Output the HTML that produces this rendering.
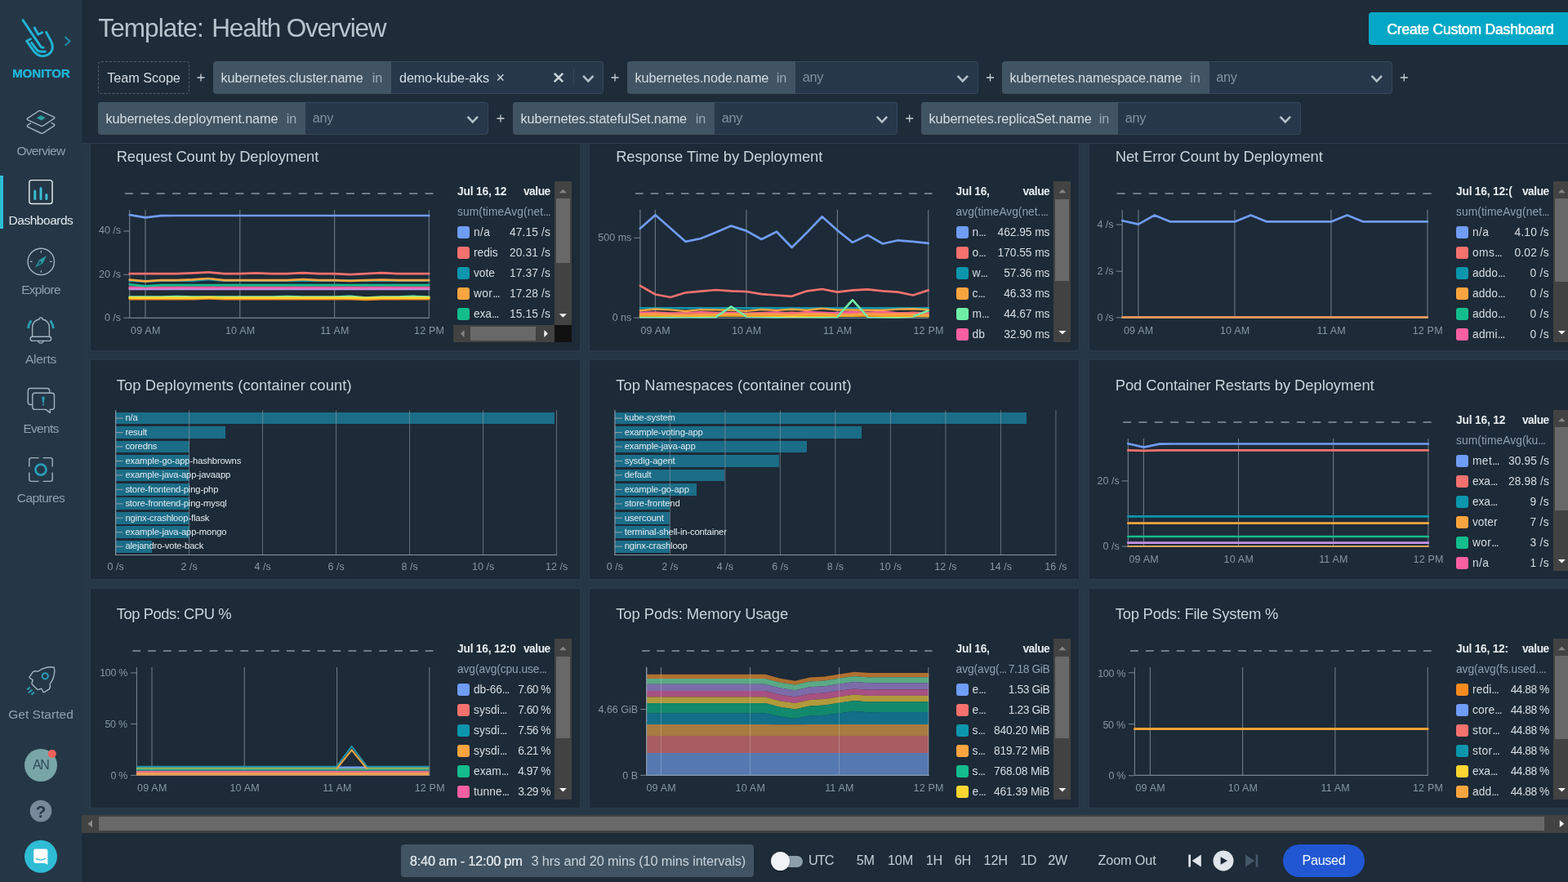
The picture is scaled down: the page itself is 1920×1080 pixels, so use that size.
<!DOCTYPE html>
<html lang="en"><head><meta charset="utf-8"><title>Template: Health Overview</title>
<style>
html,body{margin:0;padding:0;width:1920px;height:1080px;overflow:hidden;background:#1e2b38;font-family:'Liberation Sans', Arial, sans-serif;}
#bg div{position:absolute;box-sizing:border-box;}
#tx span{position:absolute;white-space:pre;}
#tx{will-change:transform;}
#gfx{position:absolute;left:0;top:0;width:1920px;height:1080px;}
#tx,#bg,#ov{position:absolute;left:0;top:0;width:1920px;height:1080px;overflow:hidden;}
#ov *{position:absolute;}
</style></head><body>
<div id="bg">
<div style="left:0px;top:0px;width:100px;height:1080px;background:#253746;"></div>
<div style="left:0px;top:215px;width:4px;height:65px;background:#2ebdd6;"></div>
<div style="left:1676px;top:15px;width:250px;height:40px;background:#04a8c6;border-radius:4px;"></div>
<div style="left:120px;top:75px;width:111.5px;height:40px;background:transparent;border:1px dashed #4d6070;border-radius:4px;"></div>
<div style="left:261px;top:75px;width:222px;height:40px;background:#415463;border-radius:4px 0 0 4px;"></div>
<div style="left:479px;top:75px;width:260px;height:40px;background:#26384a;border:1px solid #34475a;border-left:0;border-radius:0 4px 4px 0;"></div>
<div style="left:768px;top:75px;width:210px;height:40px;background:#415463;border-radius:4px 0 0 4px;"></div>
<div style="left:974px;top:75px;width:223.5px;height:40px;background:#26384a;border:1px solid #34475a;border-left:0;border-radius:0 4px 4px 0;"></div>
<div style="left:1227px;top:75px;width:257.5px;height:40px;background:#415463;border-radius:4px 0 0 4px;"></div>
<div style="left:1480.5px;top:75px;width:224px;height:40px;background:#26384a;border:1px solid #34475a;border-left:0;border-radius:0 4px 4px 0;"></div>
<div style="left:120px;top:125px;width:258px;height:40px;background:#415463;border-radius:4px 0 0 4px;"></div>
<div style="left:374px;top:125px;width:223.5px;height:40px;background:#26384a;border:1px solid #34475a;border-left:0;border-radius:0 4px 4px 0;"></div>
<div style="left:628px;top:125px;width:251px;height:40px;background:#415463;border-radius:4px 0 0 4px;"></div>
<div style="left:875px;top:125px;width:223.7px;height:40px;background:#26384a;border:1px solid #34475a;border-left:0;border-radius:0 4px 4px 0;"></div>
<div style="left:1128px;top:125px;width:245px;height:40px;background:#415463;border-radius:4px 0 0 4px;"></div>
<div style="left:1369px;top:125px;width:223.5px;height:40px;background:#26384a;border:1px solid #34475a;border-left:0;border-radius:0 4px 4px 0;"></div>
<div style="left:100px;top:175px;width:1820px;height:823px;background:#263746;"></div>
<div style="left:100px;top:175px;width:1820px;height:1px;background:#2c3f4f;"></div>
<div style="left:110px;top:176px;width:601px;height:254px;background:#1d2a37;border:1px solid #2a3c4c;border-top:0;"></div>
<div style="left:721.2px;top:176px;width:601px;height:254px;background:#1d2a37;border:1px solid #2a3c4c;border-top:0;"></div>
<div style="left:1332.6px;top:176px;width:601px;height:254px;background:#1d2a37;border:1px solid #2a3c4c;border-top:0;"></div>
<div style="left:110px;top:440px;width:601px;height:270px;background:#1d2a37;border:1px solid #2a3c4c;"></div>
<div style="left:721.2px;top:440px;width:601px;height:270px;background:#1d2a37;border:1px solid #2a3c4c;"></div>
<div style="left:1332.6px;top:440px;width:601px;height:270px;background:#1d2a37;border:1px solid #2a3c4c;"></div>
<div style="left:110px;top:720px;width:601px;height:270px;background:#1d2a37;border:1px solid #2a3c4c;"></div>
<div style="left:721.2px;top:720px;width:601px;height:270px;background:#1d2a37;border:1px solid #2a3c4c;"></div>
<div style="left:1332.6px;top:720px;width:601px;height:270px;background:#1d2a37;border:1px solid #2a3c4c;"></div>
<div style="left:100px;top:998px;width:1820px;height:22px;background:#434343;"></div>
<div style="left:121px;top:1000.2px;width:1770px;height:17px;background:#696969;"></div>
<div style="left:100px;top:1019.5px;width:1820px;height:61px;background:#1e2b38;"></div>
<div style="left:491.3px;top:1034.3px;width:431.7px;height:39.5px;background:#415463;border-radius:4px;"></div>
<div style="left:945px;top:1047.5px;width:38px;height:14px;background:#8c9faa;border-radius:7px;"></div>
<div style="left:943.5px;top:1043px;width:23px;height:23px;background:#f1f4f6;border-radius:50%;box-shadow:0 1px 2px rgba(0,0,0,.4);"></div>
<div style="left:1571.3px;top:1034.3px;width:100px;height:39.5px;background:#2157d3;border-radius:20px;"></div>
<div style="left:560px;top:277.2px;width:15px;height:15px;background:#6f9cf5;border-radius:3px;"></div>
<div style="left:560px;top:302.2px;width:15px;height:15px;background:#f4716e;border-radius:3px;"></div>
<div style="left:560px;top:327.2px;width:15px;height:15px;background:#0b96ad;border-radius:3px;"></div>
<div style="left:560px;top:352.2px;width:15px;height:15px;background:#f9a53f;border-radius:3px;"></div>
<div style="left:560px;top:377.2px;width:15px;height:15px;background:#13bd8c;border-radius:3px;"></div>
<div style="left:678.8px;top:222.4px;width:21.2px;height:175.4px;background:#424242;"></div>
<div style="left:680.9px;top:243.3px;width:17px;height:78.3px;background:#686868;"></div>
<div style="left:555px;top:397.8px;width:123.8px;height:21.2px;background:#424242;"></div>
<div style="left:678.8px;top:397.8px;width:21.2px;height:21.2px;background:#111111;"></div>
<div style="left:576px;top:399.9px;width:80px;height:17px;background:#686868;"></div>
<div style="left:1170.6px;top:277.2px;width:15px;height:15px;background:#6f9cf5;border-radius:3px;"></div>
<div style="left:1170.6px;top:302.2px;width:15px;height:15px;background:#f4716e;border-radius:3px;"></div>
<div style="left:1170.6px;top:327.2px;width:15px;height:15px;background:#0b96ad;border-radius:3px;"></div>
<div style="left:1170.6px;top:352.2px;width:15px;height:15px;background:#f9a53f;border-radius:3px;"></div>
<div style="left:1170.6px;top:377.2px;width:15px;height:15px;background:#6fefa6;border-radius:3px;"></div>
<div style="left:1170.6px;top:402.2px;width:15px;height:15px;background:#fa5fa2;border-radius:3px;"></div>
<div style="left:1290.3px;top:222.4px;width:21.2px;height:196.2px;background:#424242;"></div>
<div style="left:1292.4px;top:243.6px;width:17px;height:100.8px;background:#686868;"></div>
<div style="left:1783px;top:277.2px;width:15px;height:15px;background:#6f9cf5;border-radius:3px;"></div>
<div style="left:1783px;top:302.2px;width:15px;height:15px;background:#f4716e;border-radius:3px;"></div>
<div style="left:1783px;top:327.2px;width:15px;height:15px;background:#0b96ad;border-radius:3px;"></div>
<div style="left:1783px;top:352.2px;width:15px;height:15px;background:#f9a53f;border-radius:3px;"></div>
<div style="left:1783px;top:377.2px;width:15px;height:15px;background:#13bd8c;border-radius:3px;"></div>
<div style="left:1783px;top:402.2px;width:15px;height:15px;background:#fa5fa2;border-radius:3px;"></div>
<div style="left:1901.8px;top:222.4px;width:21.2px;height:196.2px;background:#424242;"></div>
<div style="left:1903.9px;top:243.4px;width:17px;height:101.6px;background:#686868;"></div>
<div style="left:1783px;top:557.2px;width:15px;height:15px;background:#6f9cf5;border-radius:3px;"></div>
<div style="left:1783px;top:582.2px;width:15px;height:15px;background:#f4716e;border-radius:3px;"></div>
<div style="left:1783px;top:607.2px;width:15px;height:15px;background:#0b96ad;border-radius:3px;"></div>
<div style="left:1783px;top:632.2px;width:15px;height:15px;background:#f9a53f;border-radius:3px;"></div>
<div style="left:1783px;top:657.2px;width:15px;height:15px;background:#13bd8c;border-radius:3px;"></div>
<div style="left:1783px;top:682.2px;width:15px;height:15px;background:#fa5fa2;border-radius:3px;"></div>
<div style="left:1901.8px;top:502.4px;width:21.2px;height:196.2px;background:#424242;"></div>
<div style="left:1903.9px;top:523.4px;width:17px;height:101.6px;background:#686868;"></div>
<div style="left:560px;top:837.2px;width:15px;height:15px;background:#6f9cf5;border-radius:3px;"></div>
<div style="left:560px;top:862.2px;width:15px;height:15px;background:#f4716e;border-radius:3px;"></div>
<div style="left:560px;top:887.2px;width:15px;height:15px;background:#0b96ad;border-radius:3px;"></div>
<div style="left:560px;top:912.2px;width:15px;height:15px;background:#f9a53f;border-radius:3px;"></div>
<div style="left:560px;top:937.2px;width:15px;height:15px;background:#13bd8c;border-radius:3px;"></div>
<div style="left:560px;top:962.2px;width:15px;height:15px;background:#fa5fa2;border-radius:3px;"></div>
<div style="left:678.8px;top:782.4px;width:21.2px;height:196.2px;background:#424242;"></div>
<div style="left:680.9px;top:803.6px;width:17px;height:100.8px;background:#686868;"></div>
<div style="left:1170.6px;top:837.2px;width:15px;height:15px;background:#6f9cf5;border-radius:3px;"></div>
<div style="left:1170.6px;top:862.2px;width:15px;height:15px;background:#f4716e;border-radius:3px;"></div>
<div style="left:1170.6px;top:887.2px;width:15px;height:15px;background:#0b96ad;border-radius:3px;"></div>
<div style="left:1170.6px;top:912.2px;width:15px;height:15px;background:#f9a53f;border-radius:3px;"></div>
<div style="left:1170.6px;top:937.2px;width:15px;height:15px;background:#13bd8c;border-radius:3px;"></div>
<div style="left:1170.6px;top:962.2px;width:15px;height:15px;background:#fdd632;border-radius:3px;"></div>
<div style="left:1290.3px;top:782.4px;width:21.2px;height:196.2px;background:#424242;"></div>
<div style="left:1292.4px;top:803.6px;width:17px;height:100.8px;background:#686868;"></div>
<div style="left:1783px;top:837.2px;width:15px;height:15px;background:#f68b1e;border-radius:3px;"></div>
<div style="left:1783px;top:862.2px;width:15px;height:15px;background:#6f9cf5;border-radius:3px;"></div>
<div style="left:1783px;top:887.2px;width:15px;height:15px;background:#f4716e;border-radius:3px;"></div>
<div style="left:1783px;top:912.2px;width:15px;height:15px;background:#0b96ad;border-radius:3px;"></div>
<div style="left:1783px;top:937.2px;width:15px;height:15px;background:#fdd632;border-radius:3px;"></div>
<div style="left:1783px;top:962.2px;width:15px;height:15px;background:#f9a53f;border-radius:3px;"></div>
<div style="left:1901.8px;top:782.4px;width:21.2px;height:196.2px;background:#424242;"></div>
<div style="left:1903.9px;top:803.4px;width:17px;height:101.6px;background:#686868;"></div>
<div style="left:141.6px;top:504.7px;width:537.75px;height:14.7px;background:#1b6d88;"></div>
<div style="left:141.6px;top:522.16px;width:134.1px;height:14.7px;background:#1b6d88;"></div>
<div style="left:141.6px;top:539.62px;width:90px;height:14.7px;background:#1b6d88;"></div>
<div style="left:141.6px;top:557.08px;width:90px;height:14.7px;background:#1b6d88;"></div>
<div style="left:141.6px;top:574.54px;width:90px;height:14.7px;background:#1b6d88;"></div>
<div style="left:141.6px;top:592px;width:90px;height:14.7px;background:#1b6d88;"></div>
<div style="left:141.6px;top:609.46px;width:90px;height:14.7px;background:#1b6d88;"></div>
<div style="left:141.6px;top:626.92px;width:90px;height:14.7px;background:#1b6d88;"></div>
<div style="left:141.6px;top:644.38px;width:90px;height:14.7px;background:#1b6d88;"></div>
<div style="left:141.6px;top:661.84px;width:44.55px;height:14.7px;background:#1b6d88;"></div>
<div style="left:752.9px;top:504.7px;width:503.887px;height:14.7px;background:#1b6d88;"></div>
<div style="left:752.9px;top:522.16px;width:302.062px;height:14.7px;background:#1b6d88;"></div>
<div style="left:752.9px;top:539.62px;width:234.9px;height:14.7px;background:#1b6d88;"></div>
<div style="left:752.9px;top:557.08px;width:201.487px;height:14.7px;background:#1b6d88;"></div>
<div style="left:752.9px;top:574.54px;width:133.988px;height:14.7px;background:#1b6d88;"></div>
<div style="left:752.9px;top:592px;width:100.238px;height:14.7px;background:#1b6d88;"></div>
<div style="left:752.9px;top:609.46px;width:67.5px;height:14.7px;background:#1b6d88;"></div>
<div style="left:752.9px;top:626.92px;width:67.5px;height:14.7px;background:#1b6d88;"></div>
<div style="left:752.9px;top:644.38px;width:67.5px;height:14.7px;background:#1b6d88;"></div>
<div style="left:752.9px;top:661.84px;width:67.5px;height:14.7px;background:#1b6d88;"></div>
</div>
<svg id="gfx" width="1920" height="1080" viewBox="0 0 1920 1080">
<path d="M241.5 95H250.5M246 90.5V99.5" stroke="#c9d3da" stroke-width="1.3" fill="none"/>
<path d="M678.8 89.8L689.2 100.2M689.2 89.8L678.8 100.2" stroke="#c9d3da" stroke-width="2.6" fill="none"/>
<path d="M702.5 85V105" stroke="#34475a" stroke-width="1"/>
<path d="M714.0999999999999 92.9L720.3 99.3L726.5 92.9" stroke="#b4c0c9" stroke-width="2.6" fill="none" stroke-linejoin="miter"/>
<path d="M748.5 95H757.5M753 90.5V99.5" stroke="#c9d3da" stroke-width="1.3" fill="none"/>
<path d="M1172.6 92.9L1178.8 99.3L1185.0 92.9" stroke="#b4c0c9" stroke-width="2.6" fill="none" stroke-linejoin="miter"/>
<path d="M1208.0 95H1217.0M1212.5 90.5V99.5" stroke="#c9d3da" stroke-width="1.3" fill="none"/>
<path d="M1679.6 92.9L1685.8 99.3L1692.0 92.9" stroke="#b4c0c9" stroke-width="2.6" fill="none" stroke-linejoin="miter"/>
<path d="M1714.8 95H1723.8M1719.3 90.5V99.5" stroke="#c9d3da" stroke-width="1.3" fill="none"/>
<path d="M572.5999999999999 142.9L578.8 149.3L585.0 142.9" stroke="#b4c0c9" stroke-width="2.6" fill="none" stroke-linejoin="miter"/>
<path d="M608.5 145H617.5M613 140.5V149.5" stroke="#c9d3da" stroke-width="1.3" fill="none"/>
<path d="M1073.8 142.9L1080.0 149.3L1086.2 142.9" stroke="#b4c0c9" stroke-width="2.6" fill="none" stroke-linejoin="miter"/>
<path d="M1109.2 145H1118.2M1113.7 140.5V149.5" stroke="#c9d3da" stroke-width="1.3" fill="none"/>
<path d="M1567.6 142.9L1573.8 149.3L1580.0 142.9" stroke="#b4c0c9" stroke-width="2.6" fill="none" stroke-linejoin="miter"/>
<path d="M107.5 1008.7L113 1004.2V1013.2Z" fill="#8a8a8a"/>
<path d="M1915.2 1008.7L1909.8 1004.3V1013.1Z" fill="#f4f4f4"/>
<path d="M1455.3 1046.5H1458V1061.5H1455.3ZM1470.8 1046.5V1061.5L1459.6 1054Z" fill="#dfe5ea"/>
<circle cx="1498" cy="1054" r="12.5" fill="#dfe5ea"/><path d="M1494.6 1049.2V1058.8L1503 1054Z" fill="#1e2b38"/>
<path d="M1540.3 1046.5H1537.6V1061.5H1540.3ZM1525 1046.5V1061.5L1536.2 1054Z" fill="#45586a"/>
<path d="M153 237H530.6" stroke="#6e7c86" stroke-width="1.9" stroke-dasharray="10.059 9.285" fill="none"/>
<path d="M178.0 257V389.4M293.8 257V389.4M409.6 257V389.4M525.3 257V389.4" stroke="#6d7b86" stroke-width="1.1" fill="none"/>
<path d="M158.7 257V389.9M158.2 389.4H525.8" stroke="#74838e" stroke-width="1.1" fill="none"/>
<path d="M151.2 283H158.7" stroke="#74838e" stroke-width="1.1"/>
<path d="M151.2 336.3H158.7" stroke="#74838e" stroke-width="1.1"/>
<path d="M151.2 389.2H158.7" stroke="#74838e" stroke-width="1.1"/>
<polyline points="158.7,363.7 178.0,363.7 197.3,363.7 216.6,363.0 235.9,363.7 255.2,363.7 274.5,363.7 293.8,363.7 313.1,363.7 332.4,363.7 351.6,363.2 370.9,363.7 390.2,363.7 409.5,363.7 428.8,362.9 448.1,364.5 467.4,363.7 486.7,363.7 506.0,362.9 525.3,363.7" fill="none" stroke="#6fefa6" stroke-width="2.7" stroke-linejoin="round" stroke-linecap="round"/>
<polyline points="158.7,366.1 178.0,366.1 197.3,366.1 216.6,366.1 235.9,366.1 255.2,365.4 274.5,366.1 293.8,366.1 313.1,366.1 332.4,366.1 351.6,366.1 370.9,366.1 390.2,366.1 409.5,366.1 428.8,366.1 448.1,366.9 467.4,366.1 486.7,366.1 506.0,366.1 525.3,366.1" fill="none" stroke="#f68b1e" stroke-width="2.7" stroke-linejoin="round" stroke-linecap="round"/>
<polyline points="158.7,364.7 178.0,364.7 197.3,364.7 216.6,364.7 235.9,364.7 255.2,364.2 274.5,364.7 293.8,364.7 313.1,364.7 332.4,364.7 351.6,364.7 370.9,364.7 390.2,364.7 409.5,364.7 428.8,364.7 448.1,365.2 467.4,364.7 486.7,364.7 506.0,364.7 525.3,364.7" fill="none" stroke="#fdd632" stroke-width="2.7" stroke-linejoin="round" stroke-linecap="round"/>
<polyline points="158.7,353.8 178.0,353.8 197.3,353.8 216.6,353.8 235.9,353.8 255.2,353.8 274.5,353.8 293.8,353.8 313.1,353.8 332.4,353.8 351.6,353.8 370.9,353.8 390.2,353.8 409.5,353.8 428.8,353.8 448.1,353.8 467.4,353.8 486.7,353.8 506.0,353.8 525.3,353.8" fill="none" stroke="#c58ee6" stroke-width="2.7" stroke-linejoin="round" stroke-linecap="round"/>
<polyline points="158.7,351.9 178.0,351.9 197.3,351.9 216.6,351.9 235.9,351.9 255.2,351.9 274.5,351.9 293.8,351.9 313.1,351.9 332.4,351.9 351.6,351.9 370.9,351.9 390.2,351.9 409.5,351.9 428.8,351.9 448.1,351.9 467.4,351.9 486.7,351.9 506.0,351.9 525.3,351.9" fill="none" stroke="#fa5fa2" stroke-width="2.7" stroke-linejoin="round" stroke-linecap="round"/>
<polyline points="158.7,348.3 178.0,350.4 197.3,349.1 216.6,349.1 235.9,349.1 255.2,349.1 274.5,349.1 293.8,349.1 313.1,349.1 332.4,349.1 351.6,349.1 370.9,349.1 390.2,349.1 409.5,349.1 428.8,349.1 448.1,349.1 467.4,349.1 486.7,349.1 506.0,349.1 525.3,349.1" fill="none" stroke="#13bd8c" stroke-width="2.7" stroke-linejoin="round" stroke-linecap="round"/>
<polyline points="158.7,343.6 178.0,344.7 197.3,343.6 216.6,343.6 235.9,343.6 255.2,342.1 274.5,343.6 293.8,343.6 313.1,343.6 332.4,343.6 351.6,343.6 370.9,343.6 390.2,343.6 409.5,343.6 428.8,343.6 448.1,343.6 467.4,343.6 486.7,343.6 506.0,343.6 525.3,343.6" fill="none" stroke="#0b96ad" stroke-width="2.7" stroke-linejoin="round" stroke-linecap="round"/>
<polyline points="158.7,342.6 178.0,344.4 197.3,343.1 216.6,343.1 235.9,342.3 255.2,341.0 274.5,343.1 293.8,343.1 313.1,343.1 332.4,343.1 351.6,343.1 370.9,342.1 390.2,343.1 409.5,343.1 428.8,343.9 448.1,343.1 467.4,342.6 486.7,343.1 506.0,343.1 525.3,343.1" fill="none" stroke="#f9a53f" stroke-width="2.7" stroke-linejoin="round" stroke-linecap="round"/>
<polyline points="158.7,335.1 178.0,335.1 197.3,335.1 216.6,335.1 235.9,334.3 255.2,333.3 274.5,335.1 293.8,335.1 313.1,334.3 332.4,335.1 351.6,335.1 370.9,334.1 390.2,335.1 409.5,335.1 428.8,336.2 448.1,335.1 467.4,334.1 486.7,335.1 506.0,335.1 525.3,335.1" fill="none" stroke="#f4716e" stroke-width="2.7" stroke-linejoin="round" stroke-linecap="round"/>
<polyline points="158.7,263.2 178.0,266.4 197.3,264.2 216.6,264.0 235.9,264.0 255.2,264.0 274.5,264.0 293.8,264.0 313.1,264.0 332.4,264.0 351.6,264.0 370.9,264.0 390.2,264.0 409.5,264.0 428.8,264.0 448.1,264.0 467.4,264.0 486.7,264.0 506.0,264.0 525.3,264.0" fill="none" stroke="#6f9cf5" stroke-width="2.7" stroke-linejoin="round" stroke-linecap="round"/>
<path d="M684.9 236.2L689.4 231.7L693.9 236.2Z" fill="#868686"/>
<path d="M684.9 384.2L689.4 388.7L693.9 384.2Z" fill="#f6f6f6"/>
<path d="M564.0 408.40000000000003L568.5 403.90000000000003V412.90000000000003Z" fill="#868686"/>
<path d="M670.8 408.40000000000003L666.3 403.90000000000003V412.90000000000003Z" fill="#f6f6f6"/>
<path d="M778 237H1141.5" stroke="#6e7c86" stroke-width="1.9" stroke-dasharray="9.683 8.939" fill="none"/>
<path d="M802.4 257V389.4M913.9 257V389.4M1025.4 257V389.4M1136.7 257V389.4" stroke="#6d7b86" stroke-width="1.1" fill="none"/>
<path d="M783.9 257V389.9M783.4 389.4H1137.2" stroke="#74838e" stroke-width="1.1" fill="none"/>
<path d="M776.4 291.3H783.9" stroke="#74838e" stroke-width="1.1"/>
<path d="M776.4 389.2H783.9" stroke="#74838e" stroke-width="1.1"/>
<polyline points="783.9,388.1 802.5,388.0 821.0,388.3 839.6,387.9 858.2,388.2 876.7,388.0 895.3,375.6 913.9,387.6 932.4,387.9 951.0,388.2 969.6,387.9 988.2,388.0 1006.7,388.2 1025.3,388.0 1043.9,367.3 1062.4,388.0 1081.0,388.3 1099.6,388.5 1118.1,387.5 1136.7,380.3" fill="none" stroke="#6fefa6" stroke-width="2.4" stroke-linejoin="round" stroke-linecap="round"/>
<polyline points="783.9,377.3 802.5,377.3 821.0,377.3 839.6,377.3 858.2,377.3 876.7,377.3 895.3,377.3 913.9,377.3 932.4,377.3 951.0,377.3 969.6,377.3 988.2,377.3 1006.7,377.3 1025.3,377.3 1043.9,377.3 1062.4,377.3 1081.0,377.3 1099.6,377.3 1118.1,377.3 1136.7,377.3" fill="none" stroke="#0b96ad" stroke-width="2.6" stroke-linejoin="round" stroke-linecap="round"/>
<polyline points="783.9,384.5 802.5,382.8 821.0,384.2 839.6,383.2 858.2,383.0 876.7,382.9 895.3,383.3 913.9,384.2 932.4,383.0 951.0,383.7 969.6,383.9 988.2,383.4 1006.7,383.7 1025.3,382.8 1043.9,382.8 1062.4,383.1 1081.0,383.9 1099.6,383.5 1118.1,383.3 1136.7,383.8" fill="none" stroke="#c58ee6" stroke-width="2" stroke-linejoin="round" stroke-linecap="round"/>
<polyline points="783.9,382.7 802.5,382.4 821.0,383.4 839.6,383.2 858.2,382.2 876.7,383.0 895.3,382.9 913.9,383.6 932.4,383.3 951.0,382.3 969.6,383.9 988.2,382.0 1006.7,382.6 1025.3,383.4 1043.9,382.0 1062.4,382.8 1081.0,381.8 1099.6,383.2 1118.1,383.4 1136.7,383.0" fill="none" stroke="#fa5fa2" stroke-width="2.4" stroke-linejoin="round" stroke-linecap="round"/>
<polyline points="783.9,384.2 802.5,383.0 821.0,383.8 839.6,383.6 858.2,383.6 876.7,383.3 895.3,384.1 913.9,384.3 932.4,383.3 951.0,383.7 969.6,382.5 988.2,383.8 1006.7,383.7 1025.3,384.4 1043.9,384.0 1062.4,383.0 1081.0,383.2 1099.6,383.7 1118.1,382.4 1136.7,383.3" fill="none" stroke="#f4716e" stroke-width="2" stroke-linejoin="round" stroke-linecap="round"/>
<polyline points="783.9,380.3 802.5,378.5 821.0,379.4 839.6,381.0 858.2,379.1 876.7,379.4 895.3,379.7 913.9,380.9 932.4,379.0 951.0,379.9 969.6,378.8 988.2,379.7 1006.7,377.8 1025.3,379.5 1043.9,379.5 1062.4,379.8 1081.0,379.7 1099.6,378.6 1118.1,378.3 1136.7,379.2" fill="none" stroke="#f9a53f" stroke-width="2.4" stroke-linejoin="round" stroke-linecap="round"/>
<polyline points="783.9,386.6 802.5,386.7 821.0,386.7 839.6,386.9 858.2,387.0 876.7,386.7 895.3,386.5 913.9,386.8 932.4,386.8 951.0,387.0 969.6,387.3 988.2,387.1 1006.7,386.9 1025.3,387.0 1043.9,387.0 1062.4,386.5 1081.0,387.2 1099.6,387.1 1118.1,387.2 1136.7,387.1" fill="none" stroke="#fdd632" stroke-width="2.2" stroke-linejoin="round" stroke-linecap="round"/>
<polyline points="783.9,386.3 802.5,386.3 821.0,386.0 839.6,386.5 858.2,386.0 876.7,386.0 895.3,386.1 913.9,386.1 932.4,386.2 951.0,386.0 969.6,385.9 988.2,386.1 1006.7,386.0 1025.3,386.3 1043.9,385.9 1062.4,386.8 1081.0,386.5 1099.6,386.0 1118.1,386.2 1136.7,386.2" fill="none" stroke="#f68b1e" stroke-width="2.4" stroke-linejoin="round" stroke-linecap="round"/>
<polyline points="783.9,385.0 802.5,384.7 821.0,385.6 839.6,385.8 858.2,385.2 876.7,385.2 895.3,384.7 913.9,384.7 932.4,385.0 951.0,384.9 969.6,385.6 988.2,384.8 1006.7,384.6 1025.3,385.7 1043.9,385.2 1062.4,384.8 1081.0,385.3 1099.6,384.6 1118.1,385.2 1136.7,385.8" fill="none" stroke="#f9a53f" stroke-width="2.4" stroke-linejoin="round" stroke-linecap="round"/>
<polyline points="876.7,388.0 895.3,375.6 913.9,387.6" fill="none" stroke="#6fefa6" stroke-width="2.4" stroke-linejoin="round"/>
<polyline points="1025.3,388.0 1043.9,367.3 1062.4,388.0" fill="none" stroke="#6fefa6" stroke-width="2.4" stroke-linejoin="round"/>
<polyline points="1118.1,387.5 1136.7,380.3" fill="none" stroke="#6fefa6" stroke-width="2.4" stroke-linejoin="round"/>
<polyline points="783.9,349.9 802.5,360.5 821.0,364.0 839.6,358.3 858.2,356.6 876.7,355.0 895.3,356.3 913.9,357.0 932.4,360.2 951.0,361.5 969.6,362.8 988.2,356.3 1006.7,354.0 1025.3,357.6 1043.9,355.4 1062.4,354.4 1081.0,356.3 1099.6,357.6 1118.1,361.5 1136.7,355.4" fill="none" stroke="#f4716e" stroke-width="2.7" stroke-linejoin="round" stroke-linecap="round"/>
<polyline points="783.9,279.8 802.5,263.3 821.0,279.5 839.6,295.9 858.2,292.0 876.7,284.6 895.3,276.6 913.9,282.6 932.4,293.0 951.0,283.7 969.6,303.0 988.2,284.6 1006.7,265.3 1025.3,282.0 1043.9,296.9 1062.4,287.9 1081.0,298.5 1099.6,294.3 1118.1,295.9 1136.7,297.9" fill="none" stroke="#6f9cf5" stroke-width="2.7" stroke-linejoin="round" stroke-linecap="round"/>
<path d="M1296.4 236.2L1300.9 231.7L1305.4 236.2Z" fill="#868686"/>
<path d="M1296.4 405.0L1300.9 409.5L1305.4 405.0Z" fill="#f6f6f6"/>
<path d="M1367.5 237H1752.7" stroke="#6e7c86" stroke-width="1.9" stroke-dasharray="10.261 9.472" fill="none"/>
<path d="M1393.9 257V389.4M1511.9 257V389.4M1629.9 257V389.4M1747.9 257V389.4" stroke="#6d7b86" stroke-width="1.1" fill="none"/>
<path d="M1374.2 257V389.9M1373.7 389.4H1748.4" stroke="#74838e" stroke-width="1.1" fill="none"/>
<path d="M1366.7 275H1374.2" stroke="#74838e" stroke-width="1.1"/>
<path d="M1366.7 332.2H1374.2" stroke="#74838e" stroke-width="1.1"/>
<path d="M1366.7 388.9H1374.2" stroke="#74838e" stroke-width="1.1"/>
<polyline points="1374.2,388.1 1393.9,388.1 1413.5,388.1 1433.2,388.1 1452.9,388.1 1472.5,388.1 1492.2,388.1 1511.9,388.1 1531.5,388.1 1551.2,388.1 1570.9,388.1 1590.6,388.1 1610.2,388.1 1629.9,388.1 1649.6,388.1 1669.2,388.1 1688.9,388.1 1708.6,388.1 1728.2,388.1 1747.9,388.1" fill="none" stroke="#c9665f" stroke-width="2.2" stroke-linejoin="round" stroke-linecap="round"/>
<polyline points="1374.2,388.7 1393.9,388.7 1413.5,388.7 1433.2,388.7 1452.9,388.7 1472.5,388.7 1492.2,388.7 1511.9,388.7 1531.5,388.7 1551.2,388.7 1570.9,388.7 1590.6,388.7 1610.2,388.7 1629.9,388.7 1649.6,388.7 1669.2,388.7 1688.9,388.7 1708.6,388.7 1728.2,388.7 1747.9,388.7" fill="none" stroke="#e7a158" stroke-width="2.2" stroke-linejoin="round" stroke-linecap="round"/>
<polyline points="1374.2,270.2 1393.9,274.6 1413.5,263.6 1433.2,271.4 1452.9,271.4 1472.5,271.4 1492.2,271.4 1511.9,271.4 1531.5,263.6 1551.2,271.4 1570.9,271.4 1590.6,271.4 1610.2,271.4 1629.9,271.4 1649.6,263.6 1669.2,271.4 1688.9,271.4 1708.6,271.4 1728.2,271.4 1747.9,271.4" fill="none" stroke="#6f9cf5" stroke-width="2.7" stroke-linejoin="round" stroke-linecap="round"/>
<path d="M1907.9 236.2L1912.4 231.7L1916.9 236.2Z" fill="#868686"/>
<path d="M1907.9 405.0L1912.4 409.5L1916.9 405.0Z" fill="#f6f6f6"/>
<path d="M1375 517H1752.7" stroke="#6e7c86" stroke-width="1.9" stroke-dasharray="10.062 9.288" fill="none"/>
<path d="M1400.4 537V669.4M1516.5 537V669.4M1632.6 537V669.4M1748.8 537V669.4" stroke="#6d7b86" stroke-width="1.1" fill="none"/>
<path d="M1381.3 537V669.9M1380.8 669.4H1749.3" stroke="#74838e" stroke-width="1.1" fill="none"/>
<path d="M1373.8 588.9H1381.3" stroke="#74838e" stroke-width="1.1"/>
<path d="M1373.8 669.1H1381.3" stroke="#74838e" stroke-width="1.1"/>
<polyline points="1381.3,669.0 1400.6,669.0 1420.0,669.0 1439.3,669.0 1458.7,669.0 1478.0,669.0 1497.4,669.0 1516.7,669.0 1536.0,669.0 1555.4,669.0 1574.7,669.0 1594.1,669.0 1613.4,669.0 1632.7,669.0 1652.1,669.0 1671.4,669.0 1690.8,669.0 1710.1,669.0 1729.5,669.0 1748.8,669.0" fill="none" stroke="#e7a158" stroke-width="2.2" stroke-linejoin="round" stroke-linecap="round"/>
<polyline points="1381.3,664.7 1400.6,664.7 1420.0,664.7 1439.3,664.7 1458.7,664.7 1478.0,664.7 1497.4,664.7 1516.7,664.7 1536.0,664.7 1555.4,664.7 1574.7,664.7 1594.1,664.7 1613.4,664.7 1632.7,664.7 1652.1,664.7 1671.4,664.7 1690.8,664.7 1710.1,664.7 1729.5,664.7 1748.8,664.7" fill="none" stroke="#c391ea" stroke-width="2.7" stroke-linejoin="round" stroke-linecap="round"/>
<polyline points="1381.3,657.0 1400.6,657.0 1420.0,657.0 1439.3,657.0 1458.7,657.0 1478.0,657.0 1497.4,657.0 1516.7,657.0 1536.0,657.0 1555.4,657.0 1574.7,657.0 1594.1,657.0 1613.4,657.0 1632.7,657.0 1652.1,657.0 1671.4,657.0 1690.8,657.0 1710.1,657.0 1729.5,657.0 1748.8,657.0" fill="none" stroke="#13bd8c" stroke-width="2.7" stroke-linejoin="round" stroke-linecap="round"/>
<polyline points="1381.3,640.7 1400.6,640.7 1420.0,640.7 1439.3,640.7 1458.7,640.7 1478.0,640.7 1497.4,640.7 1516.7,640.7 1536.0,640.7 1555.4,640.7 1574.7,640.7 1594.1,640.7 1613.4,640.7 1632.7,640.7 1652.1,640.7 1671.4,640.7 1690.8,640.7 1710.1,640.7 1729.5,640.7 1748.8,640.7" fill="none" stroke="#f9a53f" stroke-width="2.7" stroke-linejoin="round" stroke-linecap="round"/>
<polyline points="1381.3,632.4 1400.6,632.4 1420.0,632.4 1439.3,632.4 1458.7,632.4 1478.0,632.4 1497.4,632.4 1516.7,632.4 1536.0,632.4 1555.4,632.4 1574.7,632.4 1594.1,632.4 1613.4,632.4 1632.7,632.4 1652.1,632.4 1671.4,632.4 1690.8,632.4 1710.1,632.4 1729.5,632.4 1748.8,632.4" fill="none" stroke="#0b96ad" stroke-width="2.7" stroke-linejoin="round" stroke-linecap="round"/>
<polyline points="1381.3,551.4 1400.6,551.8 1420.0,551.3 1439.3,551.3 1458.7,551.3 1478.0,551.3 1497.4,551.3 1516.7,551.3 1536.0,551.3 1555.4,551.3 1574.7,551.3 1594.1,551.3 1613.4,551.3 1632.7,551.3 1652.1,551.3 1671.4,551.3 1690.8,551.3 1710.1,551.3 1729.5,551.3 1748.8,551.3" fill="none" stroke="#f4716e" stroke-width="2.7" stroke-linejoin="round" stroke-linecap="round"/>
<polyline points="1381.3,543.2 1400.6,547.6 1420.0,543.6 1439.3,543.5 1458.7,543.5 1478.0,543.5 1497.4,543.5 1516.7,543.5 1536.0,543.5 1555.4,543.5 1574.7,543.5 1594.1,543.5 1613.4,543.5 1632.7,543.5 1652.1,543.5 1671.4,543.5 1690.8,543.5 1710.1,543.5 1729.5,543.5 1748.8,543.5" fill="none" stroke="#6f9cf5" stroke-width="2.7" stroke-linejoin="round" stroke-linecap="round"/>
<path d="M1907.9 516.2L1912.4 511.7L1916.9 516.2Z" fill="#868686"/>
<path d="M1907.9 685.0L1912.4 689.5L1916.9 685.0Z" fill="#f6f6f6"/>
<path d="M162.2 797H530.6" stroke="#6e7c86" stroke-width="1.9" stroke-dasharray="9.814 9.059" fill="none"/>
<path d="M186.0 817V949.4M299.3 817V949.4M412.6 817V949.4M525.9 817V949.4" stroke="#6d7b86" stroke-width="1.1" fill="none"/>
<path d="M167.4 817V949.9M166.9 949.4H526.4" stroke="#74838e" stroke-width="1.1" fill="none"/>
<path d="M159.9 823.9H167.4" stroke="#74838e" stroke-width="1.1"/>
<path d="M159.9 886.5H167.4" stroke="#74838e" stroke-width="1.1"/>
<path d="M159.9 949.3H167.4" stroke="#74838e" stroke-width="1.1"/>
<path d="M167.0 948.2H525.4" stroke="#ec9a4e" stroke-width="2.4" fill="none"/>
<path d="M167.0 946.6H525.4" stroke="#f0a35d" stroke-width="2.2" fill="none"/>
<path d="M167.0 944.8H525.4" stroke="#f36f99" stroke-width="2.0" fill="none"/>
<path d="M167.0 942.5H525.4" stroke="#2db38a" stroke-width="2.2" fill="none"/>
<path d="M167.0 940.5H525.4" stroke="#a9c265" stroke-width="2.0" fill="none"/>
<path d="M413 939.6H449" stroke="#6f9cf5" stroke-width="2.2" fill="none"/>
<path d="M167.0 938.7H412.2L430.7 913.8L449.3 938.7H525.4" stroke="#2492a9" stroke-width="2" fill="none" stroke-linejoin="miter"/>
<path d="M412.2 941.4L430.7 918.4L449.3 941.4" stroke="#f9a53f" stroke-width="2.1" fill="none" stroke-linejoin="miter"/>
<path d="M684.9 796.2L689.4 791.7L693.9 796.2Z" fill="#868686"/>
<path d="M684.9 965.0L689.4 969.5L693.9 965.0Z" fill="#f6f6f6"/>
<path d="M786.1 797H1141.5" stroke="#6e7c86" stroke-width="1.9" stroke-dasharray="9.468 8.739" fill="none"/>
<path d="M809.4 817V949.4M918.5 817V949.4M1027.6 817V949.4M1136.8 817V949.4" stroke="#6d7b86" stroke-width="1.1" fill="none"/>
<path d="M791.7 817V949.9M791.2 949.4H1137.5" stroke="#74838e" stroke-width="1.1" fill="none"/>
<path d="M784.2 868.5H791.7" stroke="#74838e" stroke-width="1.1"/>
<path d="M784.2 949.3H791.7" stroke="#74838e" stroke-width="1.1"/>
<path d="M791.7 825.7 L809.9 825.7 L828.0 825.7 L846.2 825.7 L864.4 825.7 L882.6 825.7 L900.7 825.7 L918.9 825.7 L937.1 825.7 L955.3 830.8 L973.4 833.7 L991.6 829.4 L1009.8 828.4 L1028.0 825.4 L1046.1 822.7 L1064.3 824.1 L1082.5 823.9 L1100.7 823.9 L1118.8 823.9 L1137.0 823.9 L1137.0 829.2 L1118.8 829.2 L1100.7 829.2 L1082.5 829.2 L1064.3 829.4 L1046.1 828.0 L1028.0 830.6 L1009.8 833.5 L991.6 834.4 L973.4 838.5 L955.3 835.8 L937.1 830.9 L918.9 830.9 L900.7 830.9 L882.6 830.9 L864.4 830.9 L846.2 830.9 L828.0 830.9 L809.9 830.9 L791.7 830.9Z" fill="#b0702f"/>
<path d="M791.7 830.9 L809.9 830.9 L828.0 830.9 L846.2 830.9 L864.4 830.9 L882.6 830.9 L900.7 830.9 L918.9 830.9 L937.1 830.9 L955.3 835.8 L973.4 838.5 L991.6 834.4 L1009.8 833.5 L1028.0 830.6 L1046.1 828.0 L1064.3 829.4 L1082.5 829.2 L1100.7 829.2 L1118.8 829.2 L1137.0 829.2 L1137.0 836.2 L1118.8 836.2 L1100.7 836.2 L1082.5 836.2 L1064.3 836.3 L1046.1 835.0 L1028.0 837.5 L1009.8 840.3 L991.6 841.2 L973.4 845.2 L955.3 842.5 L937.1 837.8 L918.9 837.8 L900.7 837.8 L882.6 837.8 L864.4 837.8 L846.2 837.8 L828.0 837.8 L809.9 837.8 L791.7 837.8Z" fill="#5aa985"/>
<path d="M791.7 837.8 L809.9 837.8 L828.0 837.8 L846.2 837.8 L864.4 837.8 L882.6 837.8 L900.7 837.8 L918.9 837.8 L937.1 837.8 L955.3 842.5 L973.4 845.2 L991.6 841.2 L1009.8 840.3 L1028.0 837.5 L1046.1 835.0 L1064.3 836.3 L1082.5 836.2 L1100.7 836.2 L1118.8 836.2 L1137.0 836.2 L1137.0 844.5 L1118.8 844.5 L1100.7 844.5 L1082.5 844.5 L1064.3 844.7 L1046.1 843.4 L1028.0 845.8 L1009.8 848.5 L991.6 849.4 L973.4 853.3 L955.3 850.7 L937.1 846.1 L918.9 846.1 L900.7 846.1 L882.6 846.1 L864.4 846.1 L846.2 846.1 L828.0 846.1 L809.9 846.1 L791.7 846.1Z" fill="#7c6ca9"/>
<path d="M791.7 846.1 L809.9 846.1 L828.0 846.1 L846.2 846.1 L864.4 846.1 L882.6 846.1 L900.7 846.1 L918.9 846.1 L937.1 846.1 L955.3 850.7 L973.4 853.3 L991.6 849.4 L1009.8 848.5 L1028.0 845.8 L1046.1 843.4 L1064.3 844.7 L1082.5 844.5 L1100.7 844.5 L1118.8 844.5 L1137.0 844.5 L1137.0 851.8 L1118.8 851.8 L1100.7 851.8 L1082.5 851.8 L1064.3 852.0 L1046.1 850.6 L1028.0 853.2 L1009.8 856.1 L991.6 857.0 L973.4 861.1 L955.3 858.4 L937.1 853.5 L918.9 853.5 L900.7 853.5 L882.6 853.5 L864.4 853.5 L846.2 853.5 L828.0 853.5 L809.9 853.5 L791.7 853.5Z" fill="#a75182"/>
<path d="M791.7 853.5 L809.9 853.5 L828.0 853.5 L846.2 853.5 L864.4 853.5 L882.6 853.5 L900.7 853.5 L918.9 853.5 L937.1 853.5 L955.3 858.4 L973.4 861.1 L991.6 857.0 L1009.8 856.1 L1028.0 853.2 L1046.1 850.6 L1064.3 852.0 L1082.5 851.8 L1100.7 851.8 L1118.8 851.8 L1137.0 851.8 L1137.0 859.2 L1118.8 859.2 L1100.7 859.2 L1082.5 859.2 L1064.3 859.4 L1046.1 858.0 L1028.0 860.6 L1009.8 863.5 L991.6 864.4 L973.4 868.5 L955.3 865.8 L937.1 860.9 L918.9 860.9 L900.7 860.9 L882.6 860.9 L864.4 860.9 L846.2 860.9 L828.0 860.9 L809.9 860.9 L791.7 860.9Z" fill="#b19a3b"/>
<path d="M791.7 860.9 L809.9 860.9 L828.0 860.9 L846.2 860.9 L864.4 860.9 L882.6 860.9 L900.7 860.9 L918.9 860.9 L937.1 860.9 L955.3 865.8 L973.4 868.5 L991.6 864.4 L1009.8 863.5 L1028.0 860.6 L1046.1 858.0 L1064.3 859.4 L1082.5 859.2 L1100.7 859.2 L1118.8 859.2 L1137.0 859.2 L1137.0 872.1 L1118.8 872.1 L1100.7 872.1 L1082.5 872.1 L1064.3 872.2 L1046.1 871.1 L1028.0 873.2 L1009.8 875.7 L991.6 876.4 L973.4 879.9 L955.3 877.6 L937.1 873.5 L918.9 873.5 L900.7 873.5 L882.6 873.5 L864.4 873.5 L846.2 873.5 L828.0 873.5 L809.9 873.5 L791.7 873.5Z" fill="#12886c"/>
<path d="M791.7 873.5 L809.9 873.5 L828.0 873.5 L846.2 873.5 L864.4 873.5 L882.6 873.5 L900.7 873.5 L918.9 873.5 L937.1 873.5 L955.3 877.6 L973.4 879.9 L991.6 876.4 L1009.8 875.7 L1028.0 873.2 L1046.1 871.1 L1064.3 872.2 L1082.5 872.1 L1100.7 872.1 L1118.8 872.1 L1137.0 872.1 L1137.0 886.9 L1118.8 886.9 L1100.7 886.9 L1082.5 886.9 L1064.3 886.9 L1046.1 886.9 L1028.0 887.0 L1009.8 887.1 L991.6 887.1 L973.4 887.3 L955.3 887.2 L937.1 887.0 L918.9 887.0 L900.7 887.0 L882.6 887.0 L864.4 887.0 L846.2 887.0 L828.0 887.0 L809.9 887.0 L791.7 887.0Z" fill="#126e89"/>
<path d="M791.7 887.0 L809.9 887.0 L828.0 887.0 L846.2 887.0 L864.4 887.0 L882.6 887.0 L900.7 887.0 L918.9 887.0 L937.1 887.0 L955.3 887.2 L973.4 887.3 L991.6 887.1 L1009.8 887.1 L1028.0 887.0 L1046.1 886.9 L1064.3 886.9 L1082.5 886.9 L1100.7 886.9 L1118.8 886.9 L1137.0 886.9 L1137.0 900.9 L1118.8 900.9 L1100.7 900.9 L1082.5 900.9 L1064.3 900.9 L1046.1 900.9 L1028.0 900.9 L1009.8 900.9 L991.6 900.9 L973.4 900.9 L955.3 900.9 L937.1 900.9 L918.9 900.9 L900.7 900.9 L882.6 900.9 L864.4 900.9 L846.2 900.9 L828.0 900.9 L809.9 900.9 L791.7 900.9Z" fill="#a87b40"/>
<path d="M791.7 900.9 L809.9 900.9 L828.0 900.9 L846.2 900.9 L864.4 900.9 L882.6 900.9 L900.7 900.9 L918.9 900.9 L937.1 900.9 L955.3 900.9 L973.4 900.9 L991.6 900.9 L1009.8 900.9 L1028.0 900.9 L1046.1 900.9 L1064.3 900.9 L1082.5 900.9 L1100.7 900.9 L1118.8 900.9 L1137.0 900.9 L1137.0 922.0 L1118.8 922.0 L1100.7 922.0 L1082.5 922.0 L1064.3 922.0 L1046.1 922.0 L1028.0 922.0 L1009.8 922.0 L991.6 922.0 L973.4 922.0 L955.3 922.0 L937.1 922.0 L918.9 922.0 L900.7 922.0 L882.6 922.0 L864.4 922.0 L846.2 922.0 L828.0 922.0 L809.9 922.0 L791.7 922.0Z" fill="#a85d60"/>
<path d="M791.7 922.0 L809.9 922.0 L828.0 922.0 L846.2 922.0 L864.4 922.0 L882.6 922.0 L900.7 922.0 L918.9 922.0 L937.1 922.0 L955.3 922.0 L973.4 922.0 L991.6 922.0 L1009.8 922.0 L1028.0 922.0 L1046.1 922.0 L1064.3 922.0 L1082.5 922.0 L1100.7 922.0 L1118.8 922.0 L1137.0 922.0 L1137.0 949.3 L1118.8 949.3 L1100.7 949.3 L1082.5 949.3 L1064.3 949.3 L1046.1 949.3 L1028.0 949.3 L1009.8 949.3 L991.6 949.3 L973.4 949.3 L955.3 949.3 L937.1 949.3 L918.9 949.3 L900.7 949.3 L882.6 949.3 L864.4 949.3 L846.2 949.3 L828.0 949.3 L809.9 949.3 L791.7 949.3Z" fill="#5578b1"/>
<path d="M809.4 825V949.3M918.5 825V949.3M1027.6 825V949.3M1136.6 825V949.3" stroke="#ffffff" stroke-opacity="0.22" stroke-width="1" fill="none"/>
<path d="M791.7 817V949.8M791.2 949.3H1137.5" stroke="#8fa0ad" stroke-width="1.1" fill="none"/>
<path d="M1296.4 796.2L1300.9 791.7L1305.4 796.2Z" fill="#868686"/>
<path d="M1296.4 965.0L1300.9 969.5L1305.4 965.0Z" fill="#f6f6f6"/>
<path d="M1384 797H1752.7" stroke="#6e7c86" stroke-width="1.9" stroke-dasharray="9.822 9.066" fill="none"/>
<path d="M1408.4 817V949.4M1521.6 817V949.4M1634.9 817V949.4M1748.2 817V949.4" stroke="#6d7b86" stroke-width="1.1" fill="none"/>
<path d="M1389.4 817V949.9M1388.9 949.4H1748.7" stroke="#74838e" stroke-width="1.1" fill="none"/>
<path d="M1381.9 823.8H1389.4" stroke="#74838e" stroke-width="1.1"/>
<path d="M1381.9 886.6H1389.4" stroke="#74838e" stroke-width="1.1"/>
<path d="M1381.9 949.7H1389.4" stroke="#74838e" stroke-width="1.1"/>
<polyline points="1389.4,892.6 1408.3,892.6 1427.2,892.6 1446.1,892.6 1464.9,892.6 1483.8,892.6 1502.7,892.6 1521.6,892.6 1540.5,892.6 1559.4,892.6 1578.2,892.6 1597.1,892.6 1616.0,892.6 1634.9,892.6 1653.8,892.6 1672.7,892.6 1691.5,892.6 1710.4,892.6 1729.3,892.6 1748.2,892.6" fill="none" stroke="#f68b1e" stroke-width="2.6" stroke-linejoin="round" stroke-linecap="round"/>
<polyline points="1389.4,892.5 1408.3,892.5 1427.2,892.5 1446.1,892.5 1464.9,892.5 1483.8,892.5 1502.7,892.5 1521.6,892.5 1540.5,892.5 1559.4,892.5 1578.2,892.5 1597.1,892.5 1616.0,892.5 1634.9,892.5 1653.8,892.5 1672.7,892.5 1691.5,892.5 1710.4,892.5 1729.3,892.5 1748.2,892.5" fill="none" stroke="#f5a63c" stroke-width="2.4" stroke-linejoin="round" stroke-linecap="round"/>
<path d="M1907.9 796.2L1912.4 791.7L1916.9 796.2Z" fill="#868686"/>
<path d="M1907.9 965.0L1912.4 969.5L1916.9 965.0Z" fill="#f6f6f6"/>
<path d="M231.6 502.2V679.5M321.6 502.2V679.5M411.6 502.2V679.5M501.6 502.2V679.5M591.6 502.2V679.5M681.6 502.2V679.5" stroke="#8e9aa4" stroke-opacity="0.62" stroke-width="1" fill="none"/>
<path d="M141.6 502.2V680.0M141.1 679.5H682.1" stroke="#8a97a1" stroke-width="1.2" fill="none"/>
<path d="M141.6 512.1H150.6" stroke="#8a97a1" stroke-width="1.2"/>
<path d="M141.6 529.6H150.6" stroke="#8a97a1" stroke-width="1.2"/>
<path d="M141.6 547.0H150.6" stroke="#8a97a1" stroke-width="1.2"/>
<path d="M141.6 564.5H150.6" stroke="#8a97a1" stroke-width="1.2"/>
<path d="M141.6 581.9H150.6" stroke="#8a97a1" stroke-width="1.2"/>
<path d="M141.6 599.4H150.6" stroke="#8a97a1" stroke-width="1.2"/>
<path d="M141.6 616.9H150.6" stroke="#8a97a1" stroke-width="1.2"/>
<path d="M141.6 634.3H150.6" stroke="#8a97a1" stroke-width="1.2"/>
<path d="M141.6 651.8H150.6" stroke="#8a97a1" stroke-width="1.2"/>
<path d="M141.6 669.2H150.6" stroke="#8a97a1" stroke-width="1.2"/>
<path d="M820.4 502.2V679.5M887.9 502.2V679.5M955.4 502.2V679.5M1022.9 502.2V679.5M1090.4 502.2V679.5M1157.9 502.2V679.5M1225.4 502.2V679.5M1292.9 502.2V679.5" stroke="#8e9aa4" stroke-opacity="0.62" stroke-width="1" fill="none"/>
<path d="M752.9 502.2V680.0M752.4 679.5H1293.4" stroke="#8a97a1" stroke-width="1.2" fill="none"/>
<path d="M752.9 512.1H761.9" stroke="#8a97a1" stroke-width="1.2"/>
<path d="M752.9 529.6H761.9" stroke="#8a97a1" stroke-width="1.2"/>
<path d="M752.9 547.0H761.9" stroke="#8a97a1" stroke-width="1.2"/>
<path d="M752.9 564.5H761.9" stroke="#8a97a1" stroke-width="1.2"/>
<path d="M752.9 581.9H761.9" stroke="#8a97a1" stroke-width="1.2"/>
<path d="M752.9 599.4H761.9" stroke="#8a97a1" stroke-width="1.2"/>
<path d="M752.9 616.9H761.9" stroke="#8a97a1" stroke-width="1.2"/>
<path d="M752.9 634.3H761.9" stroke="#8a97a1" stroke-width="1.2"/>
<path d="M752.9 651.8H761.9" stroke="#8a97a1" stroke-width="1.2"/>
<path d="M752.9 669.2H761.9" stroke="#8a97a1" stroke-width="1.2"/>
<g fill="none" stroke="#20b3d5" stroke-width="2.9" stroke-linecap="round" stroke-linejoin="round"><path d="M28 24.6L49.6 56.6Q51 58.6 53.2 58.4"/><path d="M42.2 34L46.8 42.2L51.6 39.8"/><path d="M56.6 39.4L62.6 50.6C65.8 56.8 64.6 63.4 59 66.8C53 70.4 46 68.6 41.8 63.2L32.6 50.2L37.4 47.8"/><path d="M38.6 52.4L44.8 60.6Q46.8 63.2 50 63.2H55.4"/></g>
<path d="M79.6 45L85.4 50.4L79.6 55.8" fill="none" stroke="#1f8dac" stroke-width="2"/>
<g fill="none" stroke="#a3b3bf" stroke-width="1.4" stroke-linejoin="round"><path d="M37.8 150.6L33.8 153.4Q32.6 154.6 34 155.4L50 163Q51.4 163.6 52.8 162.8L66.2 154.2Q67.6 153 66.2 152.2L62.6 150.4"/><path d="M34 146.8Q32.6 145.9 33.8 144.9L47.2 136Q48.6 135.1 50 135.8L66.2 143.4Q67.6 144.2 66.2 145.2L52.8 154Q51.4 154.9 50 154.2Z"/></g>
<path d="M44.9 144.5L50 141.3L55.6 144.3L50.7 147.6Z" fill="#2b9ea0"/>
<rect x="35.8" y="220.6" width="28.2" height="28.8" rx="3" fill="none" stroke="#e3eaef" stroke-width="1.45"/>
<path d="M42.8 234V243.4M50 230.4V243.4M56.9 238.6V243.4" stroke="#3bbdd6" stroke-width="3" stroke-linecap="round" fill="none"/>
<circle cx="50.3" cy="320.4" r="16.2" fill="none" stroke="#a3b3bf" stroke-width="1.4"/>
<path d="M50.3 307V309.6M50.3 331.2V333.8M37 320.4H39.6M61 320.4H63.6" stroke="#a3b3bf" stroke-width="1.3" fill="none"/>
<path d="M57 313.3L52.4 322.6L43.3 327.6L48 318.2Z" fill="#2a9ca6"/>
<path d="M48.6 319.2L51.6 321.6L46 325.2Z" fill="#253746" opacity="0.75"/>
<g fill="none" stroke="#a3b3bf" stroke-width="1.4" stroke-linejoin="round"><path d="M39.6 412V400.6C39.6 395.2 43.6 391.6 48 391C48 388.4 52 388.4 52 391C56.4 391.6 60.4 395.2 60.4 400.6V412"/><rect x="37.2" y="412.2" width="25.4" height="5.2" rx="2.4"/><path d="M46.8 417.6A3.3 3.3 0 0 0 53.2 417.6"/></g>
<path d="M38.2 392.4Q35 397 34.4 402.2M61.6 392.4Q64.8 397 65.4 402.2" fill="none" stroke="#2a9cb2" stroke-width="2.8"/>
<rect x="34.3" y="475.5" width="26.4" height="20" rx="3" fill="none" stroke="#a3b3bf" stroke-width="1.4"/>
<path d="M42.8 481.2H63.6Q66.5 481.2 66.5 484.2V498.4Q66.5 501.4 63.6 501.4H61.2V505.4L56 501.4H42.8Q39.8 501.4 39.8 498.4V484.2Q39.8 481.2 42.8 481.2Z" fill="#253746" stroke="#a3b3bf" stroke-width="1.4" stroke-linejoin="round"/>
<path d="M51.2 486.6Q53 484.4 54.8 486.6L53.8 493.4H52.2Z" fill="#2a9cb2"/><rect x="52" y="494.6" width="2" height="2" fill="#2a9cb2"/>
<path d="M47.6 560.6H38.4Q35.8 560.6 35.8 563.2V571.6M35.8 578.6V586.8Q35.8 589.4 38.4 589.4H47.6M52.6 589.4H61.6Q64.2 589.4 64.2 586.8V578.6M64.2 571.6V563.2Q64.2 560.6 61.6 560.6H52.6" fill="none" stroke="#a3b3bf" stroke-width="1.4"/>
<circle cx="50" cy="575.1" r="6.5" fill="none" stroke="#2a9bb6" stroke-width="2.8"/>
<path d="M66.3 817.2C67.4 822 66.6 830 61.2 837.6C61.8 839.4 61.6 841.6 60.4 843.6L54.2 847.6Q53.2 848 52.8 847L50.8 843.2C49 844 47.4 844.4 45.8 844.4L39 837.6C39 836 39.4 834.4 40.2 832.6L36.6 830.4Q35.6 829.8 36.2 828.8L40.4 822.6C42.6 821.6 44.6 821.6 46.4 822.2C53.6 816.8 61.6 816 66.3 817.2Z" fill="none" stroke="#a3b3bf" stroke-width="1.4" stroke-linejoin="round"/>
<circle cx="55.3" cy="827.8" r="3.6" fill="none" stroke="#2a9bb6" stroke-width="2"/>
<path d="M33.2 844.6L36.8 841.4M34.8 848.6L39.6 844.4M38.4 850.8L42 847.6" stroke="#2a9cb2" stroke-width="2" fill="none"/>
<circle cx="50" cy="937" r="20" fill="#78a5a8"/>
<circle cx="63.8" cy="923" r="5" fill="#f0625a"/>
<circle cx="50" cy="993" r="13.3" fill="#77899a"/>
<circle cx="50" cy="1048.8" r="20" fill="#2fbcd5"/>
<path d="M43.6 1039.6H56Q58.4 1039.6 58.4 1042V1059L55 1057H43.6Q41.2 1057 41.2 1054.6V1042Q41.2 1039.6 43.6 1039.6Z" fill="#ffffff"/>
<path d="M44.4 1051.4Q49.8 1054.8 55.2 1051.4" fill="none" stroke="#2fbcd5" stroke-width="1.4" stroke-linecap="round"/>
</svg>
<div id="tx">
<span style="left:120.30px;top:14.89px;font-size:31.5px;line-height:38px;color:#b7c4ce;letter-spacing:-0.898px;">Template:</span>
<span style="left:259.30px;top:14.89px;font-size:31.5px;line-height:38px;color:#b7c4ce;letter-spacing:-1.200px;">Health Overview</span>
<span style="left:1698.30px;top:26.04px;font-size:17.5px;line-height:21px;color:#f2fdff;letter-spacing:-0.168px;text-shadow:0.35px 0 0 #f2fdff,-0.2px 0 0 #f2fdff;">Create Custom Dashboard</span>
<span style="left:131.30px;top:84.57px;font-size:16.25px;line-height:20px;color:#d3dde5;letter-spacing:-0.083px;">Team Scope</span>
<span style="left:270.60px;top:84.57px;font-size:16.25px;line-height:20px;color:#d3dde5;letter-spacing:-0.130px;">kubernetes.cluster.name</span>
<span style="left:455.70px;top:84.57px;font-size:16.25px;line-height:20px;color:#9aacb9;">in</span>
<span style="left:489.00px;top:84.57px;font-size:16.25px;line-height:20px;color:#d3dde5;letter-spacing:-0.154px;">demo-kube-aks</span>
<span style="left:607.50px;top:83.96px;font-size:18px;line-height:22px;color:#d3dde5;">×</span>
<span style="left:777.60px;top:84.57px;font-size:16.25px;line-height:20px;color:#d3dde5;letter-spacing:-0.130px;">kubernetes.node.name</span>
<span style="left:950.70px;top:84.57px;font-size:16.25px;line-height:20px;color:#9aacb9;">in</span>
<span style="left:982.80px;top:83.97px;font-size:16.25px;line-height:20px;color:#8093a1;letter-spacing:-0.334px;">any</span>
<span style="left:1236.60px;top:84.57px;font-size:16.25px;line-height:20px;color:#d3dde5;letter-spacing:-0.130px;">kubernetes.namespace.name</span>
<span style="left:1457.20px;top:84.57px;font-size:16.25px;line-height:20px;color:#9aacb9;">in</span>
<span style="left:1489.30px;top:83.97px;font-size:16.25px;line-height:20px;color:#8093a1;letter-spacing:-0.334px;">any</span>
<span style="left:129.60px;top:134.57px;font-size:16.25px;line-height:20px;color:#d3dde5;letter-spacing:-0.130px;">kubernetes.deployment.name</span>
<span style="left:350.70px;top:134.57px;font-size:16.25px;line-height:20px;color:#9aacb9;">in</span>
<span style="left:382.80px;top:133.97px;font-size:16.25px;line-height:20px;color:#8093a1;letter-spacing:-0.334px;">any</span>
<span style="left:637.60px;top:134.57px;font-size:16.25px;line-height:20px;color:#d3dde5;letter-spacing:-0.130px;">kubernetes.statefulSet.name</span>
<span style="left:851.70px;top:134.57px;font-size:16.25px;line-height:20px;color:#9aacb9;">in</span>
<span style="left:883.80px;top:133.97px;font-size:16.25px;line-height:20px;color:#8093a1;letter-spacing:-0.334px;">any</span>
<span style="left:1137.60px;top:134.57px;font-size:16.25px;line-height:20px;color:#d3dde5;letter-spacing:-0.130px;">kubernetes.replicaSet.name</span>
<span style="left:1345.70px;top:134.57px;font-size:16.25px;line-height:20px;color:#9aacb9;">in</span>
<span style="left:1377.80px;top:133.97px;font-size:16.25px;line-height:20px;color:#8093a1;letter-spacing:-0.334px;">any</span>
<span style="left:142.70px;top:181.12px;font-size:18.4px;line-height:22px;color:#c9d4dc;letter-spacing:-0.110px;">Request Count by Deployment</span>
<span style="left:754.20px;top:181.12px;font-size:18.4px;line-height:22px;color:#c9d4dc;letter-spacing:-0.094px;">Response Time by Deployment</span>
<span style="left:1365.70px;top:181.12px;font-size:18.4px;line-height:22px;color:#c9d4dc;letter-spacing:-0.088px;">Net Error Count by Deployment</span>
<span style="left:142.70px;top:461.12px;font-size:18.4px;line-height:22px;color:#c9d4dc;letter-spacing:0.085px;">Top Deployments (container count)</span>
<span style="left:754.20px;top:461.12px;font-size:18.4px;line-height:22px;color:#c9d4dc;letter-spacing:0.103px;">Top Namespaces (container count)</span>
<span style="left:1365.70px;top:461.12px;font-size:18.4px;line-height:22px;color:#c9d4dc;letter-spacing:-0.054px;">Pod Container Restarts by Deployment</span>
<span style="left:142.70px;top:741.12px;font-size:18.4px;line-height:22px;color:#c9d4dc;letter-spacing:-0.446px;">Top Pods: CPU %</span>
<span style="left:754.20px;top:741.12px;font-size:18.4px;line-height:22px;color:#c9d4dc;letter-spacing:-0.027px;">Top Pods: Memory Usage</span>
<span style="left:1365.70px;top:741.12px;font-size:18.4px;line-height:22px;color:#c9d4dc;letter-spacing:-0.214px;">Top Pods: File System %</span>
<span style="left:501.80px;top:1043.77px;font-size:16.25px;line-height:20px;color:#d8e0e6;letter-spacing:-0.179px;text-shadow:0.3px 0 0 #d8e0e6;">8:40 am - 12:00 pm</span>
<span style="left:650.50px;top:1043.77px;font-size:16.25px;line-height:20px;color:#c8d3db;letter-spacing:-0.106px;">3 hrs and 20 mins (10 mins intervals)</span>
<span style="left:990.00px;top:1043.27px;font-size:16.25px;line-height:20px;color:#c3ced6;letter-spacing:-0.969px;">UTC</span>
<span style="left:1048.70px;top:1042.97px;font-size:16.25px;line-height:20px;color:#c3ced6;letter-spacing:-0.289px;">5M</span>
<span style="left:1087.00px;top:1042.97px;font-size:16.25px;line-height:20px;color:#c3ced6;letter-spacing:-0.208px;">10M</span>
<span style="left:1133.70px;top:1042.97px;font-size:16.25px;line-height:20px;color:#c3ced6;letter-spacing:-0.141px;">1H</span>
<span style="left:1168.70px;top:1042.97px;font-size:16.25px;line-height:20px;color:#c3ced6;letter-spacing:-0.141px;">6H</span>
<span style="left:1204.50px;top:1042.97px;font-size:16.25px;line-height:20px;color:#c3ced6;letter-spacing:-0.104px;">12H</span>
<span style="left:1249.30px;top:1042.97px;font-size:16.25px;line-height:20px;color:#c3ced6;letter-spacing:-0.641px;">1D</span>
<span style="left:1283.30px;top:1042.97px;font-size:16.25px;line-height:20px;color:#c3ced6;letter-spacing:-0.688px;">2W</span>
<span style="left:1344.50px;top:1042.97px;font-size:16.25px;line-height:20px;color:#c3ced6;letter-spacing:-0.156px;">Zoom Out</span>
<span style="left:1594.50px;top:1043.47px;font-size:16.25px;line-height:20px;color:#f4f7ff;letter-spacing:-0.354px;">Paused</span>
<span style="left:120.99px;top:275.47px;font-size:12.5px;line-height:15px;color:#8697a4;">40 /s</span>
<span style="left:120.99px;top:328.57px;font-size:12.5px;line-height:15px;color:#8697a4;">20 /s</span>
<span style="left:127.94px;top:382.07px;font-size:12.5px;line-height:15px;color:#8697a4;">0 /s</span>
<span style="left:160.08px;top:398.17px;font-size:12.5px;line-height:15px;color:#8697a4;letter-spacing:0.200px;">09 AM</span>
<span style="left:275.88px;top:398.17px;font-size:12.5px;line-height:15px;color:#8697a4;letter-spacing:0.200px;">10 AM</span>
<span style="left:392.14px;top:398.17px;font-size:12.5px;line-height:15px;color:#8697a4;letter-spacing:0.200px;">11 AM</span>
<span style="left:507.03px;top:398.17px;font-size:12.5px;line-height:15px;color:#8697a4;letter-spacing:0.200px;">12 PM</span>
<span style="left:560.00px;top:226.74px;font-size:13.75px;line-height:16px;color:#e6ecf0;font-weight:700;letter-spacing:-0.156px;">Jul 16, 12</span>
<span style="left:640.90px;top:226.74px;font-size:13.75px;line-height:16px;color:#e6ecf0;font-weight:700;letter-spacing:-0.454px;">value</span>
<span style="left:560.00px;top:251.64px;font-size:13.75px;line-height:16px;color:#8ea1b1;letter-spacing:0.092px;">sum(timeAvg(net<span style="letter-spacing:-1px">...</span></span>
<span style="left:580.00px;top:276.74px;font-size:13.75px;line-height:16px;color:#d5dde3;letter-spacing:0.432px;">n/a</span>
<span style="left:624.00px;top:276.74px;font-size:13.75px;line-height:16px;color:#d5dde3;letter-spacing:0.121px;">47.15 /s</span>
<span style="left:580.00px;top:301.74px;font-size:13.75px;line-height:16px;color:#d5dde3;letter-spacing:-0.029px;">redis</span>
<span style="left:624.00px;top:301.74px;font-size:13.75px;line-height:16px;color:#d5dde3;letter-spacing:0.121px;">20.31 /s</span>
<span style="left:580.00px;top:326.74px;font-size:13.75px;line-height:16px;color:#d5dde3;letter-spacing:-0.029px;">vote</span>
<span style="left:624.00px;top:326.74px;font-size:13.75px;line-height:16px;color:#d5dde3;letter-spacing:0.121px;">17.37 /s</span>
<span style="left:580.00px;top:351.74px;font-size:13.75px;line-height:16px;color:#d5dde3;letter-spacing:0.329px;">wor<span style="letter-spacing:-1px">...</span></span>
<span style="left:624.00px;top:351.74px;font-size:13.75px;line-height:16px;color:#d5dde3;letter-spacing:0.121px;">17.28 /s</span>
<span style="left:580.00px;top:376.74px;font-size:13.75px;line-height:16px;color:#d5dde3;letter-spacing:-0.087px;">exa<span style="letter-spacing:-1px">...</span></span>
<span style="left:624.00px;top:376.74px;font-size:13.75px;line-height:16px;color:#d5dde3;letter-spacing:0.121px;">15.15 /s</span>
<span style="left:732.30px;top:283.57px;font-size:12.5px;line-height:15px;color:#8697a4;">500 ms</span>
<span style="left:749.66px;top:382.17px;font-size:12.5px;line-height:15px;color:#8697a4;">0 ns</span>
<span style="left:784.48px;top:398.17px;font-size:12.5px;line-height:15px;color:#8697a4;letter-spacing:0.200px;">09 AM</span>
<span style="left:895.98px;top:398.17px;font-size:12.5px;line-height:15px;color:#8697a4;letter-spacing:0.200px;">10 AM</span>
<span style="left:1007.94px;top:398.17px;font-size:12.5px;line-height:15px;color:#8697a4;letter-spacing:0.200px;">11 AM</span>
<span style="left:1118.43px;top:398.17px;font-size:12.5px;line-height:15px;color:#8697a4;letter-spacing:0.200px;">12 PM</span>
<span style="left:1170.60px;top:226.74px;font-size:13.75px;line-height:16px;color:#e6ecf0;font-weight:700;letter-spacing:-0.252px;">Jul 16,</span>
<span style="left:1252.40px;top:226.74px;font-size:13.75px;line-height:16px;color:#e6ecf0;font-weight:700;letter-spacing:-0.454px;">value</span>
<span style="left:1170.60px;top:251.64px;font-size:13.75px;line-height:16px;color:#8ea1b1;letter-spacing:0.009px;">avg(timeAvg(net.<span style="letter-spacing:-1px">...</span></span>
<span style="left:1190.60px;top:276.74px;font-size:13.75px;line-height:16px;color:#d5dde3;">n<span style="letter-spacing:-1px">...</span></span>
<span style="left:1221.60px;top:276.74px;font-size:13.75px;line-height:16px;color:#d5dde3;letter-spacing:-0.047px;">462.95 ms</span>
<span style="left:1190.60px;top:301.74px;font-size:13.75px;line-height:16px;color:#d5dde3;">o<span style="letter-spacing:-1px">...</span></span>
<span style="left:1221.60px;top:301.74px;font-size:13.75px;line-height:16px;color:#d5dde3;letter-spacing:-0.047px;">170.55 ms</span>
<span style="left:1190.60px;top:326.74px;font-size:13.75px;line-height:16px;color:#d5dde3;">w<span style="letter-spacing:-1px">...</span></span>
<span style="left:1229.21px;top:326.74px;font-size:13.75px;line-height:16px;color:#d5dde3;letter-spacing:-0.046px;">57.36 ms</span>
<span style="left:1190.60px;top:351.74px;font-size:13.75px;line-height:16px;color:#d5dde3;">c<span style="letter-spacing:-1px">...</span></span>
<span style="left:1229.21px;top:351.74px;font-size:13.75px;line-height:16px;color:#d5dde3;letter-spacing:-0.046px;">46.33 ms</span>
<span style="left:1190.60px;top:376.74px;font-size:13.75px;line-height:16px;color:#d5dde3;">m<span style="letter-spacing:-1px">...</span></span>
<span style="left:1229.21px;top:376.74px;font-size:13.75px;line-height:16px;color:#d5dde3;letter-spacing:-0.046px;">44.67 ms</span>
<span style="left:1190.60px;top:401.74px;font-size:13.75px;line-height:16px;color:#d5dde3;letter-spacing:-0.030px;">db</span>
<span style="left:1229.21px;top:401.74px;font-size:13.75px;line-height:16px;color:#d5dde3;letter-spacing:-0.046px;">32.90 ms</span>
<span style="left:1343.44px;top:267.67px;font-size:12.5px;line-height:15px;color:#8697a4;">4 /s</span>
<span style="left:1343.44px;top:324.97px;font-size:12.5px;line-height:15px;color:#8697a4;">2 /s</span>
<span style="left:1343.44px;top:382.27px;font-size:12.5px;line-height:15px;color:#8697a4;">0 /s</span>
<span style="left:1375.98px;top:398.17px;font-size:12.5px;line-height:15px;color:#8697a4;letter-spacing:0.200px;">09 AM</span>
<span style="left:1493.98px;top:398.17px;font-size:12.5px;line-height:15px;color:#8697a4;letter-spacing:0.200px;">10 AM</span>
<span style="left:1612.44px;top:398.17px;font-size:12.5px;line-height:15px;color:#8697a4;letter-spacing:0.200px;">11 AM</span>
<span style="left:1729.63px;top:398.17px;font-size:12.5px;line-height:15px;color:#8697a4;letter-spacing:0.200px;">12 PM</span>
<span style="left:1783.00px;top:226.74px;font-size:13.75px;line-height:16px;color:#e6ecf0;font-weight:700;letter-spacing:-0.207px;">Jul 16, 12:(</span>
<span style="left:1863.90px;top:226.74px;font-size:13.75px;line-height:16px;color:#e6ecf0;font-weight:700;letter-spacing:-0.454px;">value</span>
<span style="left:1783.00px;top:251.64px;font-size:13.75px;line-height:16px;color:#8ea1b1;letter-spacing:0.092px;">sum(timeAvg(net<span style="letter-spacing:-1px">...</span></span>
<span style="left:1803.00px;top:276.74px;font-size:13.75px;line-height:16px;color:#d5dde3;letter-spacing:0.432px;">n/a</span>
<span style="left:1854.60px;top:276.74px;font-size:13.75px;line-height:16px;color:#d5dde3;letter-spacing:0.145px;">4.10 /s</span>
<span style="left:1803.00px;top:301.74px;font-size:13.75px;line-height:16px;color:#d5dde3;letter-spacing:0.417px;">oms<span style="letter-spacing:-1px">...</span></span>
<span style="left:1854.60px;top:301.74px;font-size:13.75px;line-height:16px;color:#d5dde3;letter-spacing:0.145px;">0.02 /s</span>
<span style="left:1803.00px;top:326.74px;font-size:13.75px;line-height:16px;color:#d5dde3;letter-spacing:0.108px;">addo<span style="letter-spacing:-1px">...</span></span>
<span style="left:1873.38px;top:326.74px;font-size:13.75px;line-height:16px;color:#d5dde3;letter-spacing:0.338px;">0 /s</span>
<span style="left:1803.00px;top:351.74px;font-size:13.75px;line-height:16px;color:#d5dde3;letter-spacing:0.108px;">addo<span style="letter-spacing:-1px">...</span></span>
<span style="left:1873.38px;top:351.74px;font-size:13.75px;line-height:16px;color:#d5dde3;letter-spacing:0.338px;">0 /s</span>
<span style="left:1803.00px;top:376.74px;font-size:13.75px;line-height:16px;color:#d5dde3;letter-spacing:0.108px;">addo<span style="letter-spacing:-1px">...</span></span>
<span style="left:1873.38px;top:376.74px;font-size:13.75px;line-height:16px;color:#d5dde3;letter-spacing:0.338px;">0 /s</span>
<span style="left:1803.00px;top:401.74px;font-size:13.75px;line-height:16px;color:#d5dde3;letter-spacing:0.252px;">admi<span style="letter-spacing:-1px">...</span></span>
<span style="left:1873.38px;top:401.74px;font-size:13.75px;line-height:16px;color:#d5dde3;letter-spacing:0.338px;">0 /s</span>
<span style="left:1343.59px;top:581.57px;font-size:12.5px;line-height:15px;color:#8697a4;">20 /s</span>
<span style="left:1350.54px;top:662.27px;font-size:12.5px;line-height:15px;color:#8697a4;">0 /s</span>
<span style="left:1382.48px;top:678.17px;font-size:12.5px;line-height:15px;color:#8697a4;letter-spacing:0.200px;">09 AM</span>
<span style="left:1498.58px;top:678.17px;font-size:12.5px;line-height:15px;color:#8697a4;letter-spacing:0.200px;">10 AM</span>
<span style="left:1615.14px;top:678.17px;font-size:12.5px;line-height:15px;color:#8697a4;letter-spacing:0.200px;">11 AM</span>
<span style="left:1730.53px;top:678.17px;font-size:12.5px;line-height:15px;color:#8697a4;letter-spacing:0.200px;">12 PM</span>
<span style="left:1783.00px;top:506.74px;font-size:13.75px;line-height:16px;color:#e6ecf0;font-weight:700;letter-spacing:-0.156px;">Jul 16, 12</span>
<span style="left:1863.90px;top:506.74px;font-size:13.75px;line-height:16px;color:#e6ecf0;font-weight:700;letter-spacing:-0.454px;">value</span>
<span style="left:1783.00px;top:531.64px;font-size:13.75px;line-height:16px;color:#8ea1b1;letter-spacing:0.089px;">sum(timeAvg(ku<span style="letter-spacing:-1px">...</span></span>
<span style="left:1803.00px;top:556.74px;font-size:13.75px;line-height:16px;color:#d5dde3;letter-spacing:0.402px;">met<span style="letter-spacing:-1px">...</span></span>
<span style="left:1847.00px;top:556.74px;font-size:13.75px;line-height:16px;color:#d5dde3;letter-spacing:0.121px;">30.95 /s</span>
<span style="left:1803.00px;top:581.74px;font-size:13.75px;line-height:16px;color:#d5dde3;letter-spacing:-0.087px;">exa<span style="letter-spacing:-1px">...</span></span>
<span style="left:1847.00px;top:581.74px;font-size:13.75px;line-height:16px;color:#d5dde3;letter-spacing:0.121px;">28.98 /s</span>
<span style="left:1803.00px;top:606.74px;font-size:13.75px;line-height:16px;color:#d5dde3;letter-spacing:-0.087px;">exa<span style="letter-spacing:-1px">...</span></span>
<span style="left:1873.38px;top:606.74px;font-size:13.75px;line-height:16px;color:#d5dde3;letter-spacing:0.338px;">9 /s</span>
<span style="left:1803.00px;top:631.74px;font-size:13.75px;line-height:16px;color:#d5dde3;letter-spacing:-0.022px;">voter</span>
<span style="left:1873.38px;top:631.74px;font-size:13.75px;line-height:16px;color:#d5dde3;letter-spacing:0.338px;">7 /s</span>
<span style="left:1803.00px;top:656.74px;font-size:13.75px;line-height:16px;color:#d5dde3;letter-spacing:0.329px;">wor<span style="letter-spacing:-1px">...</span></span>
<span style="left:1873.38px;top:656.74px;font-size:13.75px;line-height:16px;color:#d5dde3;letter-spacing:0.338px;">3 /s</span>
<span style="left:1803.00px;top:681.74px;font-size:13.75px;line-height:16px;color:#d5dde3;letter-spacing:0.432px;">n/a</span>
<span style="left:1873.38px;top:681.74px;font-size:13.75px;line-height:16px;color:#d5dde3;letter-spacing:0.338px;">1 /s</span>
<span style="left:122.20px;top:816.87px;font-size:12.5px;line-height:15px;color:#8697a4;letter-spacing:-0.331px;">100 %</span>
<span style="left:128.40px;top:879.87px;font-size:12.5px;line-height:15px;color:#8697a4;letter-spacing:-0.225px;">50 %</span>
<span style="left:135.50px;top:942.57px;font-size:12.5px;line-height:15px;color:#8697a4;letter-spacing:-0.349px;">0 %</span>
<span style="left:168.08px;top:958.17px;font-size:12.5px;line-height:15px;color:#8697a4;letter-spacing:0.200px;">09 AM</span>
<span style="left:281.38px;top:958.17px;font-size:12.5px;line-height:15px;color:#8697a4;letter-spacing:0.200px;">10 AM</span>
<span style="left:395.14px;top:958.17px;font-size:12.5px;line-height:15px;color:#8697a4;letter-spacing:0.200px;">11 AM</span>
<span style="left:507.63px;top:958.17px;font-size:12.5px;line-height:15px;color:#8697a4;letter-spacing:0.200px;">12 PM</span>
<span style="left:560.00px;top:786.74px;font-size:13.75px;line-height:16px;color:#e6ecf0;font-weight:700;letter-spacing:-0.205px;">Jul 16, 12:0</span>
<span style="left:640.90px;top:786.74px;font-size:13.75px;line-height:16px;color:#e6ecf0;font-weight:700;letter-spacing:-0.454px;">value</span>
<span style="left:560.00px;top:811.64px;font-size:13.75px;line-height:16px;color:#8ea1b1;letter-spacing:-0.090px;">avg(avg(cpu.use<span style="letter-spacing:-1px">...</span></span>
<span style="left:580.00px;top:836.74px;font-size:13.75px;line-height:16px;color:#d5dde3;letter-spacing:-0.066px;">db-66<span style="letter-spacing:-1px">...</span></span>
<span style="left:634.25px;top:836.74px;font-size:13.75px;line-height:16px;color:#d5dde3;letter-spacing:-0.527px;">7.60 %</span>
<span style="left:580.00px;top:861.74px;font-size:13.75px;line-height:16px;color:#d5dde3;letter-spacing:0.126px;">sysdi<span style="letter-spacing:-1px">...</span></span>
<span style="left:634.25px;top:861.74px;font-size:13.75px;line-height:16px;color:#d5dde3;letter-spacing:-0.527px;">7.60 %</span>
<span style="left:580.00px;top:886.74px;font-size:13.75px;line-height:16px;color:#d5dde3;letter-spacing:0.126px;">sysdi<span style="letter-spacing:-1px">...</span></span>
<span style="left:634.25px;top:886.74px;font-size:13.75px;line-height:16px;color:#d5dde3;letter-spacing:-0.527px;">7.56 %</span>
<span style="left:580.00px;top:911.74px;font-size:13.75px;line-height:16px;color:#d5dde3;letter-spacing:0.126px;">sysdi<span style="letter-spacing:-1px">...</span></span>
<span style="left:634.25px;top:911.74px;font-size:13.75px;line-height:16px;color:#d5dde3;letter-spacing:-0.527px;">6.21 %</span>
<span style="left:580.00px;top:936.74px;font-size:13.75px;line-height:16px;color:#d5dde3;letter-spacing:0.039px;">exam<span style="letter-spacing:-1px">...</span></span>
<span style="left:634.25px;top:936.74px;font-size:13.75px;line-height:16px;color:#d5dde3;letter-spacing:-0.527px;">4.97 %</span>
<span style="left:580.00px;top:961.74px;font-size:13.75px;line-height:16px;color:#d5dde3;letter-spacing:0.049px;">tunne<span style="letter-spacing:-1px">...</span></span>
<span style="left:634.25px;top:961.74px;font-size:13.75px;line-height:16px;color:#d5dde3;letter-spacing:-0.527px;">3.29 %</span>
<span style="left:732.46px;top:861.97px;font-size:12.5px;line-height:15px;color:#8697a4;">4.66 GiB</span>
<span style="left:762.33px;top:942.77px;font-size:12.5px;line-height:15px;color:#8697a4;">0 B</span>
<span style="left:791.48px;top:958.17px;font-size:12.5px;line-height:15px;color:#8697a4;letter-spacing:0.200px;">09 AM</span>
<span style="left:900.58px;top:958.17px;font-size:12.5px;line-height:15px;color:#8697a4;letter-spacing:0.200px;">10 AM</span>
<span style="left:1010.14px;top:958.17px;font-size:12.5px;line-height:15px;color:#8697a4;letter-spacing:0.200px;">11 AM</span>
<span style="left:1118.53px;top:958.17px;font-size:12.5px;line-height:15px;color:#8697a4;letter-spacing:0.200px;">12 PM</span>
<span style="left:1170.60px;top:786.74px;font-size:13.75px;line-height:16px;color:#e6ecf0;font-weight:700;letter-spacing:-0.252px;">Jul 16,</span>
<span style="left:1252.40px;top:786.74px;font-size:13.75px;line-height:16px;color:#e6ecf0;font-weight:700;letter-spacing:-0.454px;">value</span>
<span style="left:1170.60px;top:811.64px;font-size:13.75px;line-height:16px;color:#8ea1b1;letter-spacing:-0.067px;">avg(avg(<span style="letter-spacing:-1px">...</span></span>
<span style="left:1234.72px;top:811.64px;font-size:13.75px;line-height:16px;color:#8ea1b1;letter-spacing:-0.355px;">7.18 GiB</span>
<span style="left:1190.60px;top:836.74px;font-size:13.75px;line-height:16px;color:#d5dde3;">e<span style="letter-spacing:-1px">...</span></span>
<span style="left:1234.72px;top:836.74px;font-size:13.75px;line-height:16px;color:#d5dde3;letter-spacing:-0.355px;">1.53 GiB</span>
<span style="left:1190.60px;top:861.74px;font-size:13.75px;line-height:16px;color:#d5dde3;">e<span style="letter-spacing:-1px">...</span></span>
<span style="left:1234.72px;top:861.74px;font-size:13.75px;line-height:16px;color:#d5dde3;letter-spacing:-0.355px;">1.23 GiB</span>
<span style="left:1190.60px;top:886.74px;font-size:13.75px;line-height:16px;color:#d5dde3;">s<span style="letter-spacing:-1px">...</span></span>
<span style="left:1216.91px;top:886.74px;font-size:13.75px;line-height:16px;color:#d5dde3;letter-spacing:-0.108px;">840.20 MiB</span>
<span style="left:1190.60px;top:911.74px;font-size:13.75px;line-height:16px;color:#d5dde3;">s<span style="letter-spacing:-1px">...</span></span>
<span style="left:1216.91px;top:911.74px;font-size:13.75px;line-height:16px;color:#d5dde3;letter-spacing:-0.108px;">819.72 MiB</span>
<span style="left:1190.60px;top:936.74px;font-size:13.75px;line-height:16px;color:#d5dde3;">s<span style="letter-spacing:-1px">...</span></span>
<span style="left:1216.91px;top:936.74px;font-size:13.75px;line-height:16px;color:#d5dde3;letter-spacing:-0.108px;">768.08 MiB</span>
<span style="left:1190.60px;top:961.74px;font-size:13.75px;line-height:16px;color:#d5dde3;">e<span style="letter-spacing:-1px">...</span></span>
<span style="left:1216.91px;top:961.74px;font-size:13.75px;line-height:16px;color:#d5dde3;letter-spacing:-0.108px;">461.39 MiB</span>
<span style="left:1344.20px;top:817.57px;font-size:12.5px;line-height:15px;color:#8697a4;letter-spacing:-0.331px;">100 %</span>
<span style="left:1350.40px;top:880.57px;font-size:12.5px;line-height:15px;color:#8697a4;letter-spacing:-0.225px;">50 %</span>
<span style="left:1357.50px;top:943.27px;font-size:12.5px;line-height:15px;color:#8697a4;letter-spacing:-0.349px;">0 %</span>
<span style="left:1390.48px;top:958.17px;font-size:12.5px;line-height:15px;color:#8697a4;letter-spacing:0.200px;">09 AM</span>
<span style="left:1503.68px;top:958.17px;font-size:12.5px;line-height:15px;color:#8697a4;letter-spacing:0.200px;">10 AM</span>
<span style="left:1617.44px;top:958.17px;font-size:12.5px;line-height:15px;color:#8697a4;letter-spacing:0.200px;">11 AM</span>
<span style="left:1729.93px;top:958.17px;font-size:12.5px;line-height:15px;color:#8697a4;letter-spacing:0.200px;">12 PM</span>
<span style="left:1783.00px;top:786.74px;font-size:13.75px;line-height:16px;color:#e6ecf0;font-weight:700;letter-spacing:-0.247px;">Jul 16, 12:</span>
<span style="left:1863.90px;top:786.74px;font-size:13.75px;line-height:16px;color:#e6ecf0;font-weight:700;letter-spacing:-0.454px;">value</span>
<span style="left:1783.00px;top:811.64px;font-size:13.75px;line-height:16px;color:#8ea1b1;letter-spacing:-0.038px;">avg(avg(fs.used.<span style="letter-spacing:-1px">...</span></span>
<span style="left:1803.00px;top:836.74px;font-size:13.75px;line-height:16px;color:#d5dde3;letter-spacing:0.101px;">redi<span style="letter-spacing:-1px">...</span></span>
<span style="left:1849.64px;top:836.74px;font-size:13.75px;line-height:16px;color:#d5dde3;letter-spacing:-0.459px;">44.88 %</span>
<span style="left:1803.00px;top:861.74px;font-size:13.75px;line-height:16px;color:#d5dde3;letter-spacing:0.120px;">core<span style="letter-spacing:-1px">...</span></span>
<span style="left:1849.64px;top:861.74px;font-size:13.75px;line-height:16px;color:#d5dde3;letter-spacing:-0.459px;">44.88 %</span>
<span style="left:1803.00px;top:886.74px;font-size:13.75px;line-height:16px;color:#d5dde3;letter-spacing:0.363px;">stor<span style="letter-spacing:-1px">...</span></span>
<span style="left:1849.64px;top:886.74px;font-size:13.75px;line-height:16px;color:#d5dde3;letter-spacing:-0.459px;">44.88 %</span>
<span style="left:1803.00px;top:911.74px;font-size:13.75px;line-height:16px;color:#d5dde3;letter-spacing:0.363px;">stor<span style="letter-spacing:-1px">...</span></span>
<span style="left:1849.64px;top:911.74px;font-size:13.75px;line-height:16px;color:#d5dde3;letter-spacing:-0.459px;">44.88 %</span>
<span style="left:1803.00px;top:936.74px;font-size:13.75px;line-height:16px;color:#d5dde3;letter-spacing:-0.087px;">exa<span style="letter-spacing:-1px">...</span></span>
<span style="left:1849.64px;top:936.74px;font-size:13.75px;line-height:16px;color:#d5dde3;letter-spacing:-0.459px;">44.88 %</span>
<span style="left:1803.00px;top:961.74px;font-size:13.75px;line-height:16px;color:#d5dde3;letter-spacing:0.116px;">add<span style="letter-spacing:-1px">...</span></span>
<span style="left:1849.64px;top:961.74px;font-size:13.75px;line-height:16px;color:#d5dde3;letter-spacing:-0.459px;">44.88 %</span>
<span style="left:153.40px;top:504.30px;font-size:11.25px;line-height:14px;color:#e3eaef;letter-spacing:-0.160px;">n/a</span>
<span style="left:153.40px;top:521.76px;font-size:11.25px;line-height:14px;color:#e3eaef;letter-spacing:-0.160px;">result</span>
<span style="left:153.40px;top:539.22px;font-size:11.25px;line-height:14px;color:#e3eaef;letter-spacing:-0.160px;">coredns</span>
<span style="left:153.40px;top:556.68px;font-size:11.25px;line-height:14px;color:#e3eaef;letter-spacing:-0.160px;">example-go-app-hashbrowns</span>
<span style="left:153.40px;top:574.14px;font-size:11.25px;line-height:14px;color:#e3eaef;letter-spacing:-0.160px;">example-java-app-javaapp</span>
<span style="left:153.40px;top:591.60px;font-size:11.25px;line-height:14px;color:#e3eaef;letter-spacing:-0.160px;">store-frontend-ping-php</span>
<span style="left:153.40px;top:609.06px;font-size:11.25px;line-height:14px;color:#e3eaef;letter-spacing:-0.160px;">store-frontend-ping-mysql</span>
<span style="left:153.40px;top:626.52px;font-size:11.25px;line-height:14px;color:#e3eaef;letter-spacing:-0.160px;">nginx-crashloop-flask</span>
<span style="left:153.40px;top:643.98px;font-size:11.25px;line-height:14px;color:#e3eaef;letter-spacing:-0.160px;">example-java-app-mongo</span>
<span style="left:153.40px;top:661.44px;font-size:11.25px;line-height:14px;color:#e3eaef;letter-spacing:-0.160px;">alejandro-vote-back</span>
<span style="left:131.52px;top:687.17px;font-size:12.5px;line-height:15px;color:#8697a4;">0 /s</span>
<span style="left:221.52px;top:687.17px;font-size:12.5px;line-height:15px;color:#8697a4;">2 /s</span>
<span style="left:311.52px;top:687.17px;font-size:12.5px;line-height:15px;color:#8697a4;">4 /s</span>
<span style="left:401.52px;top:687.17px;font-size:12.5px;line-height:15px;color:#8697a4;">6 /s</span>
<span style="left:491.52px;top:687.17px;font-size:12.5px;line-height:15px;color:#8697a4;">8 /s</span>
<span style="left:578.05px;top:687.17px;font-size:12.5px;line-height:15px;color:#8697a4;">10 /s</span>
<span style="left:668.05px;top:687.17px;font-size:12.5px;line-height:15px;color:#8697a4;">12 /s</span>
<span style="left:764.70px;top:504.30px;font-size:11.25px;line-height:14px;color:#e3eaef;letter-spacing:-0.160px;">kube-system</span>
<span style="left:764.70px;top:521.76px;font-size:11.25px;line-height:14px;color:#e3eaef;letter-spacing:-0.160px;">example-voting-app</span>
<span style="left:764.70px;top:539.22px;font-size:11.25px;line-height:14px;color:#e3eaef;letter-spacing:-0.160px;">example-java-app</span>
<span style="left:764.70px;top:556.68px;font-size:11.25px;line-height:14px;color:#e3eaef;letter-spacing:-0.160px;">sysdig-agent</span>
<span style="left:764.70px;top:574.14px;font-size:11.25px;line-height:14px;color:#e3eaef;letter-spacing:-0.160px;">default</span>
<span style="left:764.70px;top:591.60px;font-size:11.25px;line-height:14px;color:#e3eaef;letter-spacing:-0.160px;">example-go-app</span>
<span style="left:764.70px;top:609.06px;font-size:11.25px;line-height:14px;color:#e3eaef;letter-spacing:-0.160px;">store-frontend</span>
<span style="left:764.70px;top:626.52px;font-size:11.25px;line-height:14px;color:#e3eaef;letter-spacing:-0.160px;">usercount</span>
<span style="left:764.70px;top:643.98px;font-size:11.25px;line-height:14px;color:#e3eaef;letter-spacing:-0.160px;">terminal-shell-in-container</span>
<span style="left:764.70px;top:661.44px;font-size:11.25px;line-height:14px;color:#e3eaef;letter-spacing:-0.160px;">nginx-crashloop</span>
<span style="left:742.82px;top:687.17px;font-size:12.5px;line-height:15px;color:#8697a4;">0 /s</span>
<span style="left:810.32px;top:687.17px;font-size:12.5px;line-height:15px;color:#8697a4;">2 /s</span>
<span style="left:877.82px;top:687.17px;font-size:12.5px;line-height:15px;color:#8697a4;">4 /s</span>
<span style="left:945.32px;top:687.17px;font-size:12.5px;line-height:15px;color:#8697a4;">6 /s</span>
<span style="left:1012.82px;top:687.17px;font-size:12.5px;line-height:15px;color:#8697a4;">8 /s</span>
<span style="left:1076.85px;top:687.17px;font-size:12.5px;line-height:15px;color:#8697a4;">10 /s</span>
<span style="left:1144.35px;top:687.17px;font-size:12.5px;line-height:15px;color:#8697a4;">12 /s</span>
<span style="left:1211.85px;top:687.17px;font-size:12.5px;line-height:15px;color:#8697a4;">14 /s</span>
<span style="left:1279.35px;top:687.17px;font-size:12.5px;line-height:15px;color:#8697a4;">16 /s</span>
<span style="left:14.50px;top:82.28px;font-size:14.2px;line-height:17px;color:#20b3d5;font-weight:700;transform:scaleX(1.0579);transform-origin:0 0;text-shadow:0.3px 0 0 #20b3d5;">MONITOR</span>
<span style="left:20.40px;top:174.83px;font-size:15.5px;line-height:19px;color:#8fa1af;letter-spacing:-0.676px;">Overview</span>
<span style="left:10.60px;top:259.83px;font-size:15.5px;line-height:19px;color:#e0e8ed;letter-spacing:-0.478px;">Dashboards</span>
<span style="left:26.15px;top:344.83px;font-size:15.5px;line-height:19px;color:#8fa1af;letter-spacing:-0.695px;">Explore</span>
<span style="left:31.00px;top:429.83px;font-size:15.5px;line-height:19px;color:#8fa1af;letter-spacing:-0.271px;">Alerts</span>
<span style="left:28.50px;top:514.83px;font-size:15.5px;line-height:19px;color:#8fa1af;letter-spacing:-0.732px;">Events</span>
<span style="left:20.80px;top:599.83px;font-size:15.5px;line-height:19px;color:#8fa1af;letter-spacing:-0.563px;">Captures</span>
<span style="left:10.20px;top:865.13px;font-size:15.5px;line-height:19px;color:#8fa1af;letter-spacing:0.030px;">Get Started</span>
<span style="left:39.90px;top:926.76px;font-size:16px;line-height:19px;color:#2f4d57;letter-spacing:-1.200px;">AN</span>
<span style="left:43.73px;top:981.10px;font-size:20.5px;line-height:25px;color:#253746;font-weight:700;">?</span>
</div>
<div id="ov">

</div>
</body></html>
